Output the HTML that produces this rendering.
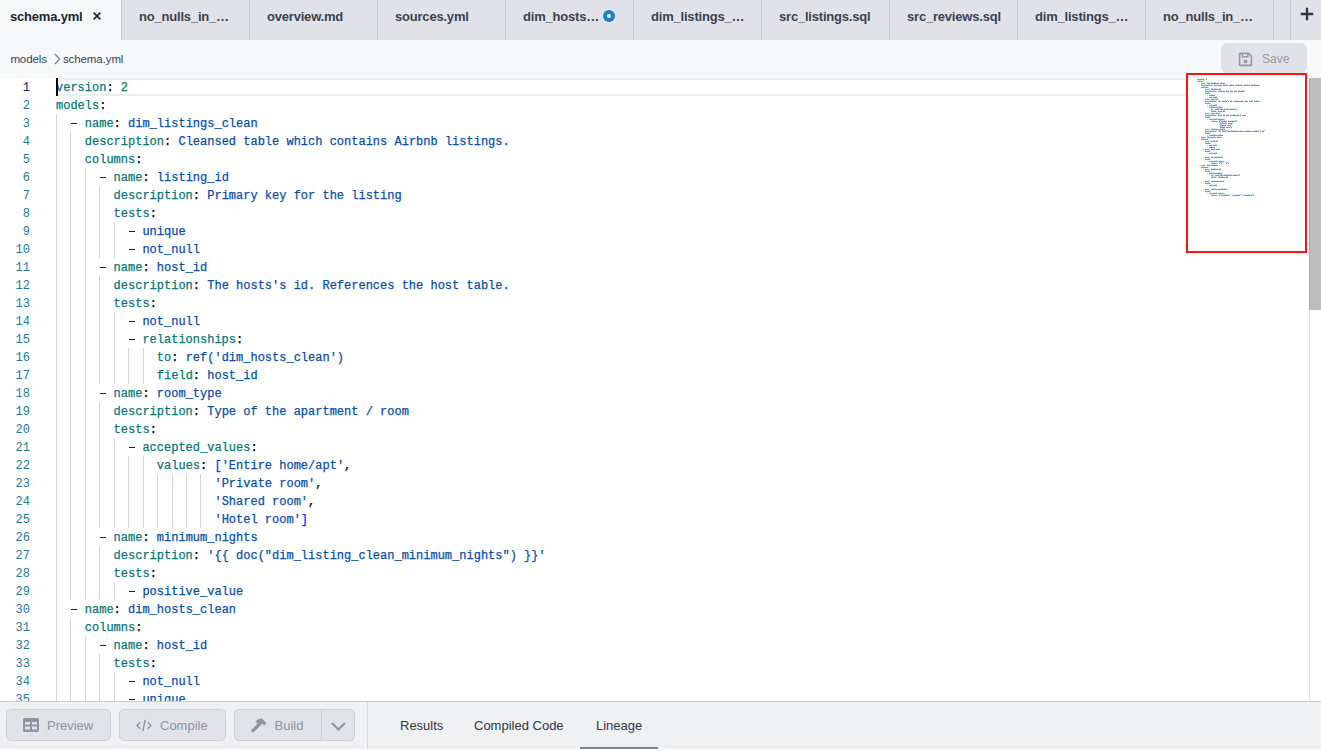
<!DOCTYPE html>
<html><head><meta charset="utf-8">
<style>
*{margin:0;padding:0;box-sizing:border-box}
html,body{width:1321px;height:751px;overflow:hidden;background:#f7f8fa;font-family:"Liberation Sans",sans-serif;position:relative}
.tabs{position:absolute;left:0;top:0;width:1321px;height:40px;background:#e1e2e7}
.tab{position:absolute;top:0;height:40px;border-left:1px solid #c9ccd3;color:#3a4352;font-weight:bold;font-size:13px;letter-spacing:-0.2px;line-height:34px;padding-left:17px;white-space:nowrap}
.tab.act{background:#f7f8fa;color:#1e2530;border-left:none;padding-left:10px}
.x{position:absolute;left:93px;top:12px;width:8px;height:8px}
.dot{position:absolute;top:10px;width:12px;height:12px;border-radius:50%;background:#1a82cc}
.dot:after{content:"";position:absolute;left:3.8px;top:3.8px;width:4.4px;height:4.4px;border-radius:50%;background:#fff}
.plusdiv{position:absolute;top:0;width:1px;height:40px;background:#c9ccd3}
.crumb{position:absolute;left:10.4px;top:51px;font-size:11.5px;letter-spacing:-0.1px;color:#3a4352;white-space:nowrap;line-height:16px}
.save{position:absolute;left:1221px;top:43px;width:86px;height:30px;border-radius:6px;background:#e1e2e7;color:#9198a3;font-size:12px;line-height:30px}
.editor{position:absolute;left:0;top:78px;width:1309px;height:623px;background:#fff;overflow:hidden}
.row{position:absolute;left:0;width:1308px;height:18px}
.row i{position:absolute;top:0;width:1px;height:18px;background:#d3d3d3}
.ln{position:absolute;left:0;top:1px;width:30px;text-align:right;font-family:"Liberation Mono",monospace;font-size:12px;line-height:18px;color:#237893}
.ln.cur{color:#0b216f}
pre{position:absolute;left:56px;top:1px;font-family:"Liberation Mono",monospace;font-size:12px;line-height:18px;color:#000;-webkit-text-stroke:0.25px currentColor}
.k{color:#0a7676}.s{color:#0a4ea2}.n{color:#098658}.b{color:#0431fa}.p{color:#000}
.d{display:inline-block;width:7.2px;position:relative;color:transparent}
.d:after{content:"";position:absolute;left:0.6px;top:8.2px;width:6px;height:1.1px;background:#222}
.curline{position:absolute;left:56px;top:78px;width:1132px;height:18px;border-top:2px solid #eeeeee;border-bottom:2px solid #eeeeee}
.cursor{position:absolute;left:56px;top:78px;width:2px;height:18px;background:#000}
.minimap{position:absolute;left:1186px;top:73px;width:121px;height:180px;border:2px solid #ff1212}
.strack{position:absolute;left:1309px;top:78px;width:12px;height:623px;background:#fff;border-left:1px solid #e4e4e4}
.sthumb{position:absolute;left:1309px;top:78px;width:12px;height:232px;background:#bdbdbd;border-left:1px solid #a8a8a8}
.bottom{position:absolute;left:0;top:701px;width:1321px;height:48px;background:#f0f1f3;border-top:1px solid #c9ccd3}
.btn{position:absolute;top:7px;height:32px;border:1px solid #cdd0d6;border-radius:5px;background:#e1e3e8;color:#8e95a0;font-size:13px;line-height:30px}
.vdiv{position:absolute;left:367px;top:0;width:1px;height:48px;background:#d6d9de}
.bt{position:absolute;top:16px;font-size:13px;color:#2f3743;line-height:16px;white-space:nowrap}
.uline{position:absolute;left:580px;top:747px;width:78px;height:2px;background:#7d8795}
.wbot{position:absolute;left:0;top:749px;width:1321px;height:2px;background:#fff}
.mm{position:absolute;left:1197px;top:78px;font-size:1.6667px;line-height:2px;opacity:0.9}
.mm .d{width:1px}.mm .d:after{display:none}
</style></head><body>
<div class="tabs">
  <div class="tab act" style="left:0;width:121px">schema.yml<svg class="x" viewBox="0 0 8 8"><path d="M0.6 0.6L7.4 7.4M7.4 0.6L0.6 7.4" stroke="#1e2530" stroke-width="1.7"/></svg></div>
  <div class="tab" style="left:121px;width:128px">no_nulls_in_…</div>
  <div class="tab" style="left:249px;width:128px">overview.md</div>
  <div class="tab" style="left:377px;width:128px">sources.yml</div>
  <div class="tab" style="left:505px;width:128px">dim_hosts…<span class="dot" style="left:97px"></span></div>
  <div class="tab" style="left:633px;width:128px">dim_listings_…</div>
  <div class="tab" style="left:761px;width:128px">src_listings.sql</div>
  <div class="tab" style="left:889px;width:128px">src_reviews.sql</div>
  <div class="tab" style="left:1017px;width:128px">dim_listings_…</div>
  <div class="tab" style="left:1145px;width:128px">no_nulls_in_…</div>
  <div class="plusdiv" style="left:1273px"></div>
  <div class="plusdiv" style="left:1290px"></div>
  <svg style="position:absolute;left:1300px;top:7px" width="14" height="14" viewBox="0 0 14 14"><path d="M7 0.8V13.2M0.8 7H13.2" stroke="#2b3544" stroke-width="2.3"/></svg>
</div>
<div class="crumb">models <svg width="7" height="12" viewBox="0 0 7 12" style="vertical-align:-2px;margin-left:4px;margin-right:2px"><path d="M1 1L5.5 6L1 11" fill="none" stroke="#7a8290" stroke-width="1.2"/></svg>schema.yml</div>
<div class="save"><svg style="position:absolute;left:17px;top:8.6px" width="15" height="15" viewBox="0 0 15 15"><path d="M1.6 1.8Q1.6 1.4 2 1.4H10.6L13.4 4.2V12.8Q13.4 13.4 12.8 13.4H2.2Q1.6 13.4 1.6 12.8Z" fill="none" stroke="#9198a3" stroke-width="1.6" stroke-linejoin="round"/><path d="M4.4 1.4V4.8H10V1.4" fill="none" stroke="#9198a3" stroke-width="1.4"/><rect x="5.8" y="7.8" width="3.4" height="3.2" fill="#9198a3"/></svg><span style="position:absolute;left:41px;top:1px">Save</span></div>
<div class="editor"></div>
<div class="strack"></div>
<div class="curline"></div>
<div class="row" style="top:78px"><span class="ln cur">1</span><pre><span class=k>version</span><span class=p>:</span> <span class=n>2</span></pre></div>
<div class="row" style="top:96px"><span class="ln">2</span><pre><span class=k>models</span><span class=p>:</span></pre></div>
<div class="row" style="top:114px"><i style="left:56.00px"></i><span class="ln">3</span><pre>  <span class=d>-</span> <span class=k>name</span><span class=p>:</span> <span class=s>dim_listings_clean</span></pre></div>
<div class="row" style="top:132px"><i style="left:56.00px"></i><i style="left:70.44px"></i><span class="ln">4</span><pre>    <span class=k>description</span><span class=p>:</span> <span class=s>Cleansed table which contains Airbnb listings.</span></pre></div>
<div class="row" style="top:150px"><i style="left:56.00px"></i><i style="left:70.44px"></i><span class="ln">5</span><pre>    <span class=k>columns</span><span class=p>:</span></pre></div>
<div class="row" style="top:168px"><i style="left:56.00px"></i><i style="left:70.44px"></i><i style="left:84.88px"></i><span class="ln">6</span><pre>      <span class=d>-</span> <span class=k>name</span><span class=p>:</span> <span class=s>listing_id</span></pre></div>
<div class="row" style="top:186px"><i style="left:56.00px"></i><i style="left:70.44px"></i><i style="left:84.88px"></i><i style="left:99.32px"></i><span class="ln">7</span><pre>        <span class=k>description</span><span class=p>:</span> <span class=s>Primary key for the listing</span></pre></div>
<div class="row" style="top:204px"><i style="left:56.00px"></i><i style="left:70.44px"></i><i style="left:84.88px"></i><i style="left:99.32px"></i><span class="ln">8</span><pre>        <span class=k>tests</span><span class=p>:</span></pre></div>
<div class="row" style="top:222px"><i style="left:56.00px"></i><i style="left:70.44px"></i><i style="left:84.88px"></i><i style="left:99.32px"></i><i style="left:113.76px"></i><span class="ln">9</span><pre>          <span class=d>-</span> <span class=s>unique</span></pre></div>
<div class="row" style="top:240px"><i style="left:56.00px"></i><i style="left:70.44px"></i><i style="left:84.88px"></i><i style="left:99.32px"></i><i style="left:113.76px"></i><span class="ln">10</span><pre>          <span class=d>-</span> <span class=s>not_null</span></pre></div>
<div class="row" style="top:258px"><i style="left:56.00px"></i><i style="left:70.44px"></i><i style="left:84.88px"></i><span class="ln">11</span><pre>      <span class=d>-</span> <span class=k>name</span><span class=p>:</span> <span class=s>host_id</span></pre></div>
<div class="row" style="top:276px"><i style="left:56.00px"></i><i style="left:70.44px"></i><i style="left:84.88px"></i><i style="left:99.32px"></i><span class="ln">12</span><pre>        <span class=k>description</span><span class=p>:</span> <span class=s>The hosts's id. References the host table.</span></pre></div>
<div class="row" style="top:294px"><i style="left:56.00px"></i><i style="left:70.44px"></i><i style="left:84.88px"></i><i style="left:99.32px"></i><span class="ln">13</span><pre>        <span class=k>tests</span><span class=p>:</span></pre></div>
<div class="row" style="top:312px"><i style="left:56.00px"></i><i style="left:70.44px"></i><i style="left:84.88px"></i><i style="left:99.32px"></i><i style="left:113.76px"></i><span class="ln">14</span><pre>          <span class=d>-</span> <span class=s>not_null</span></pre></div>
<div class="row" style="top:330px"><i style="left:56.00px"></i><i style="left:70.44px"></i><i style="left:84.88px"></i><i style="left:99.32px"></i><i style="left:113.76px"></i><span class="ln">15</span><pre>          <span class=d>-</span> <span class=k>relationships</span><span class=p>:</span></pre></div>
<div class="row" style="top:348px"><i style="left:56.00px"></i><i style="left:70.44px"></i><i style="left:84.88px"></i><i style="left:99.32px"></i><i style="left:113.76px"></i><i style="left:128.20px"></i><i style="left:142.64px"></i><span class="ln">16</span><pre>              <span class=k>to</span><span class=p>:</span> <span class=s>ref('dim_hosts_clean')</span></pre></div>
<div class="row" style="top:366px"><i style="left:56.00px"></i><i style="left:70.44px"></i><i style="left:84.88px"></i><i style="left:99.32px"></i><i style="left:113.76px"></i><i style="left:128.20px"></i><i style="left:142.64px"></i><span class="ln">17</span><pre>              <span class=k>field</span><span class=p>:</span> <span class=s>host_id</span></pre></div>
<div class="row" style="top:384px"><i style="left:56.00px"></i><i style="left:70.44px"></i><i style="left:84.88px"></i><span class="ln">18</span><pre>      <span class=d>-</span> <span class=k>name</span><span class=p>:</span> <span class=s>room_type</span></pre></div>
<div class="row" style="top:402px"><i style="left:56.00px"></i><i style="left:70.44px"></i><i style="left:84.88px"></i><i style="left:99.32px"></i><span class="ln">19</span><pre>        <span class=k>description</span><span class=p>:</span> <span class=s>Type of the apartment / room</span></pre></div>
<div class="row" style="top:420px"><i style="left:56.00px"></i><i style="left:70.44px"></i><i style="left:84.88px"></i><i style="left:99.32px"></i><span class="ln">20</span><pre>        <span class=k>tests</span><span class=p>:</span></pre></div>
<div class="row" style="top:438px"><i style="left:56.00px"></i><i style="left:70.44px"></i><i style="left:84.88px"></i><i style="left:99.32px"></i><i style="left:113.76px"></i><span class="ln">21</span><pre>          <span class=d>-</span> <span class=k>accepted_values</span><span class=p>:</span></pre></div>
<div class="row" style="top:456px"><i style="left:56.00px"></i><i style="left:70.44px"></i><i style="left:84.88px"></i><i style="left:99.32px"></i><i style="left:113.76px"></i><i style="left:128.20px"></i><i style="left:142.64px"></i><span class="ln">22</span><pre>              <span class=k>values</span><span class=p>:</span> <span class=b>[</span><span class=s>'Entire home/apt'</span><span class=p>,</span></pre></div>
<div class="row" style="top:474px"><i style="left:56.00px"></i><i style="left:70.44px"></i><i style="left:84.88px"></i><i style="left:99.32px"></i><i style="left:113.76px"></i><i style="left:128.20px"></i><i style="left:142.64px"></i><i style="left:157.08px"></i><i style="left:171.52px"></i><i style="left:185.96px"></i><i style="left:200.40px"></i><span class="ln">23</span><pre>                      <span class=s>'Private room'</span><span class=p>,</span></pre></div>
<div class="row" style="top:492px"><i style="left:56.00px"></i><i style="left:70.44px"></i><i style="left:84.88px"></i><i style="left:99.32px"></i><i style="left:113.76px"></i><i style="left:128.20px"></i><i style="left:142.64px"></i><i style="left:157.08px"></i><i style="left:171.52px"></i><i style="left:185.96px"></i><i style="left:200.40px"></i><span class="ln">24</span><pre>                      <span class=s>'Shared room'</span><span class=p>,</span></pre></div>
<div class="row" style="top:510px"><i style="left:56.00px"></i><i style="left:70.44px"></i><i style="left:84.88px"></i><i style="left:99.32px"></i><i style="left:113.76px"></i><i style="left:128.20px"></i><i style="left:142.64px"></i><i style="left:157.08px"></i><i style="left:171.52px"></i><i style="left:185.96px"></i><i style="left:200.40px"></i><span class="ln">25</span><pre>                      <span class=s>'Hotel room'</span><span class=b>]</span></pre></div>
<div class="row" style="top:528px"><i style="left:56.00px"></i><i style="left:70.44px"></i><i style="left:84.88px"></i><span class="ln">26</span><pre>      <span class=d>-</span> <span class=k>name</span><span class=p>:</span> <span class=s>minimum_nights</span></pre></div>
<div class="row" style="top:546px"><i style="left:56.00px"></i><i style="left:70.44px"></i><i style="left:84.88px"></i><i style="left:99.32px"></i><span class="ln">27</span><pre>        <span class=k>description</span><span class=p>:</span> <span class=s>'{{ doc("dim_listing_clean_minimum_nights") }}'</span></pre></div>
<div class="row" style="top:564px"><i style="left:56.00px"></i><i style="left:70.44px"></i><i style="left:84.88px"></i><i style="left:99.32px"></i><span class="ln">28</span><pre>        <span class=k>tests</span><span class=p>:</span></pre></div>
<div class="row" style="top:582px"><i style="left:56.00px"></i><i style="left:70.44px"></i><i style="left:84.88px"></i><i style="left:99.32px"></i><i style="left:113.76px"></i><span class="ln">29</span><pre>          <span class=d>-</span> <span class=s>positive_value</span></pre></div>
<div class="row" style="top:600px"><i style="left:56.00px"></i><span class="ln">30</span><pre>  <span class=d>-</span> <span class=k>name</span><span class=p>:</span> <span class=s>dim_hosts_clean</span></pre></div>
<div class="row" style="top:618px"><i style="left:56.00px"></i><i style="left:70.44px"></i><span class="ln">31</span><pre>    <span class=k>columns</span><span class=p>:</span></pre></div>
<div class="row" style="top:636px"><i style="left:56.00px"></i><i style="left:70.44px"></i><i style="left:84.88px"></i><span class="ln">32</span><pre>      <span class=d>-</span> <span class=k>name</span><span class=p>:</span> <span class=s>host_id</span></pre></div>
<div class="row" style="top:654px"><i style="left:56.00px"></i><i style="left:70.44px"></i><i style="left:84.88px"></i><i style="left:99.32px"></i><span class="ln">33</span><pre>        <span class=k>tests</span><span class=p>:</span></pre></div>
<div class="row" style="top:672px"><i style="left:56.00px"></i><i style="left:70.44px"></i><i style="left:84.88px"></i><i style="left:99.32px"></i><i style="left:113.76px"></i><span class="ln">34</span><pre>          <span class=d>-</span> <span class=s>not_null</span></pre></div>
<div class="row" style="top:690px"><i style="left:56.00px"></i><i style="left:70.44px"></i><i style="left:84.88px"></i><i style="left:99.32px"></i><i style="left:113.76px"></i><span class="ln">35</span><pre>          <span class=d>-</span> <span class=s>unique</span></pre></div>
<div class="cursor"></div>
<svg width="1321" height="751" style="position:absolute;left:0;top:0" shape-rendering="crispEdges"><rect x="1197" y="78" width="4" height="1" fill="#008080" fill-opacity="0.07"/><rect x="1201" y="78" width="1" height="1" fill="#008080" fill-opacity="0.26"/><rect x="1202" y="78" width="2" height="1" fill="#008080" fill-opacity="0.07"/><rect x="1204" y="78" width="1" height="1" fill="#000000" fill-opacity="0.07"/><rect x="1206" y="78" width="1" height="1" fill="#098658" fill-opacity="0.24"/><rect x="1197" y="79" width="7" height="1" fill="#008080" fill-opacity="0.61"/><rect x="1204" y="79" width="1" height="1" fill="#000000" fill-opacity="0.17"/><rect x="1206" y="79" width="1" height="1" fill="#098658" fill-opacity="0.58"/><rect x="1197" y="80" width="2" height="1" fill="#008080" fill-opacity="0.07"/><rect x="1199" y="80" width="1" height="1" fill="#008080" fill-opacity="0.26"/><rect x="1200" y="80" width="1" height="1" fill="#008080" fill-opacity="0.07"/><rect x="1201" y="80" width="1" height="1" fill="#008080" fill-opacity="0.26"/><rect x="1202" y="80" width="1" height="1" fill="#008080" fill-opacity="0.07"/><rect x="1203" y="80" width="1" height="1" fill="#000000" fill-opacity="0.07"/><rect x="1197" y="81" width="6" height="1" fill="#008080" fill-opacity="0.61"/><rect x="1203" y="81" width="1" height="1" fill="#000000" fill-opacity="0.17"/><rect x="1199" y="82" width="1" height="1" fill="#000000" fill-opacity="0.04"/><rect x="1201" y="82" width="4" height="1" fill="#008080" fill-opacity="0.07"/><rect x="1205" y="82" width="1" height="1" fill="#000000" fill-opacity="0.07"/><rect x="1207" y="82" width="2" height="1" fill="#0451a5" fill-opacity="0.24"/><rect x="1209" y="82" width="2" height="1" fill="#0451a5" fill-opacity="0.06"/><rect x="1211" y="82" width="2" height="1" fill="#0451a5" fill-opacity="0.24"/><rect x="1213" y="82" width="1" height="1" fill="#0451a5" fill-opacity="0.06"/><rect x="1214" y="82" width="2" height="1" fill="#0451a5" fill-opacity="0.24"/><rect x="1216" y="82" width="5" height="1" fill="#0451a5" fill-opacity="0.06"/><rect x="1221" y="82" width="1" height="1" fill="#0451a5" fill-opacity="0.24"/><rect x="1222" y="82" width="3" height="1" fill="#0451a5" fill-opacity="0.06"/><rect x="1199" y="83" width="1" height="1" fill="#000000" fill-opacity="0.17"/><rect x="1201" y="83" width="4" height="1" fill="#008080" fill-opacity="0.61"/><rect x="1205" y="83" width="1" height="1" fill="#000000" fill-opacity="0.17"/><rect x="1207" y="83" width="3" height="1" fill="#0451a5" fill-opacity="0.58"/><rect x="1210" y="83" width="1" height="1" fill="#0451a5" fill-opacity="0.32"/><rect x="1211" y="83" width="8" height="1" fill="#0451a5" fill-opacity="0.58"/><rect x="1219" y="83" width="1" height="1" fill="#0451a5" fill-opacity="0.32"/><rect x="1220" y="83" width="5" height="1" fill="#0451a5" fill-opacity="0.58"/><rect x="1201" y="84" width="1" height="1" fill="#008080" fill-opacity="0.26"/><rect x="1202" y="84" width="4" height="1" fill="#008080" fill-opacity="0.07"/><rect x="1206" y="84" width="1" height="1" fill="#008080" fill-opacity="0.26"/><rect x="1207" y="84" width="1" height="1" fill="#008080" fill-opacity="0.07"/><rect x="1208" y="84" width="2" height="1" fill="#008080" fill-opacity="0.26"/><rect x="1210" y="84" width="2" height="1" fill="#008080" fill-opacity="0.07"/><rect x="1212" y="84" width="1" height="1" fill="#000000" fill-opacity="0.07"/><rect x="1214" y="84" width="2" height="1" fill="#0451a5" fill-opacity="0.24"/><rect x="1216" y="84" width="5" height="1" fill="#0451a5" fill-opacity="0.06"/><rect x="1221" y="84" width="1" height="1" fill="#0451a5" fill-opacity="0.24"/><rect x="1223" y="84" width="1" height="1" fill="#0451a5" fill-opacity="0.24"/><rect x="1224" y="84" width="1" height="1" fill="#0451a5" fill-opacity="0.06"/><rect x="1225" y="84" width="2" height="1" fill="#0451a5" fill-opacity="0.24"/><rect x="1227" y="84" width="1" height="1" fill="#0451a5" fill-opacity="0.06"/><rect x="1229" y="84" width="1" height="1" fill="#0451a5" fill-opacity="0.06"/><rect x="1230" y="84" width="2" height="1" fill="#0451a5" fill-opacity="0.24"/><rect x="1232" y="84" width="1" height="1" fill="#0451a5" fill-opacity="0.06"/><rect x="1233" y="84" width="1" height="1" fill="#0451a5" fill-opacity="0.24"/><rect x="1235" y="84" width="3" height="1" fill="#0451a5" fill-opacity="0.06"/><rect x="1238" y="84" width="1" height="1" fill="#0451a5" fill-opacity="0.24"/><rect x="1239" y="84" width="1" height="1" fill="#0451a5" fill-opacity="0.06"/><rect x="1240" y="84" width="1" height="1" fill="#0451a5" fill-opacity="0.24"/><rect x="1241" y="84" width="2" height="1" fill="#0451a5" fill-opacity="0.06"/><rect x="1244" y="84" width="2" height="1" fill="#0451a5" fill-opacity="0.24"/><rect x="1246" y="84" width="1" height="1" fill="#0451a5" fill-opacity="0.06"/><rect x="1247" y="84" width="1" height="1" fill="#0451a5" fill-opacity="0.24"/><rect x="1248" y="84" width="1" height="1" fill="#0451a5" fill-opacity="0.06"/><rect x="1249" y="84" width="1" height="1" fill="#0451a5" fill-opacity="0.24"/><rect x="1251" y="84" width="2" height="1" fill="#0451a5" fill-opacity="0.24"/><rect x="1253" y="84" width="1" height="1" fill="#0451a5" fill-opacity="0.06"/><rect x="1254" y="84" width="2" height="1" fill="#0451a5" fill-opacity="0.24"/><rect x="1256" y="84" width="4" height="1" fill="#0451a5" fill-opacity="0.06"/><rect x="1201" y="85" width="11" height="1" fill="#008080" fill-opacity="0.61"/><rect x="1212" y="85" width="1" height="1" fill="#000000" fill-opacity="0.17"/><rect x="1214" y="85" width="8" height="1" fill="#0451a5" fill-opacity="0.58"/><rect x="1223" y="85" width="5" height="1" fill="#0451a5" fill-opacity="0.58"/><rect x="1229" y="85" width="5" height="1" fill="#0451a5" fill-opacity="0.58"/><rect x="1235" y="85" width="8" height="1" fill="#0451a5" fill-opacity="0.58"/><rect x="1244" y="85" width="6" height="1" fill="#0451a5" fill-opacity="0.58"/><rect x="1251" y="85" width="8" height="1" fill="#0451a5" fill-opacity="0.58"/><rect x="1259" y="85" width="1" height="1" fill="#0451a5" fill-opacity="0.28"/><rect x="1201" y="86" width="2" height="1" fill="#008080" fill-opacity="0.07"/><rect x="1203" y="86" width="1" height="1" fill="#008080" fill-opacity="0.26"/><rect x="1204" y="86" width="4" height="1" fill="#008080" fill-opacity="0.07"/><rect x="1208" y="86" width="1" height="1" fill="#000000" fill-opacity="0.07"/><rect x="1201" y="87" width="7" height="1" fill="#008080" fill-opacity="0.61"/><rect x="1208" y="87" width="1" height="1" fill="#000000" fill-opacity="0.17"/><rect x="1203" y="88" width="1" height="1" fill="#000000" fill-opacity="0.04"/><rect x="1205" y="88" width="4" height="1" fill="#008080" fill-opacity="0.07"/><rect x="1209" y="88" width="1" height="1" fill="#000000" fill-opacity="0.07"/><rect x="1211" y="88" width="2" height="1" fill="#0451a5" fill-opacity="0.24"/><rect x="1213" y="88" width="1" height="1" fill="#0451a5" fill-opacity="0.06"/><rect x="1214" y="88" width="2" height="1" fill="#0451a5" fill-opacity="0.24"/><rect x="1216" y="88" width="3" height="1" fill="#0451a5" fill-opacity="0.06"/><rect x="1219" y="88" width="2" height="1" fill="#0451a5" fill-opacity="0.24"/><rect x="1203" y="89" width="1" height="1" fill="#000000" fill-opacity="0.17"/><rect x="1205" y="89" width="4" height="1" fill="#008080" fill-opacity="0.61"/><rect x="1209" y="89" width="1" height="1" fill="#000000" fill-opacity="0.17"/><rect x="1211" y="89" width="7" height="1" fill="#0451a5" fill-opacity="0.58"/><rect x="1218" y="89" width="1" height="1" fill="#0451a5" fill-opacity="0.32"/><rect x="1219" y="89" width="2" height="1" fill="#0451a5" fill-opacity="0.58"/><rect x="1205" y="90" width="1" height="1" fill="#008080" fill-opacity="0.26"/><rect x="1206" y="90" width="4" height="1" fill="#008080" fill-opacity="0.07"/><rect x="1210" y="90" width="1" height="1" fill="#008080" fill-opacity="0.26"/><rect x="1211" y="90" width="1" height="1" fill="#008080" fill-opacity="0.07"/><rect x="1212" y="90" width="2" height="1" fill="#008080" fill-opacity="0.26"/><rect x="1214" y="90" width="2" height="1" fill="#008080" fill-opacity="0.07"/><rect x="1216" y="90" width="1" height="1" fill="#000000" fill-opacity="0.07"/><rect x="1218" y="90" width="1" height="1" fill="#0451a5" fill-opacity="0.24"/><rect x="1219" y="90" width="1" height="1" fill="#0451a5" fill-opacity="0.06"/><rect x="1220" y="90" width="1" height="1" fill="#0451a5" fill-opacity="0.24"/><rect x="1221" y="90" width="4" height="1" fill="#0451a5" fill-opacity="0.06"/><rect x="1226" y="90" width="1" height="1" fill="#0451a5" fill-opacity="0.24"/><rect x="1227" y="90" width="2" height="1" fill="#0451a5" fill-opacity="0.06"/><rect x="1230" y="90" width="1" height="1" fill="#0451a5" fill-opacity="0.24"/><rect x="1231" y="90" width="2" height="1" fill="#0451a5" fill-opacity="0.06"/><rect x="1234" y="90" width="2" height="1" fill="#0451a5" fill-opacity="0.24"/><rect x="1236" y="90" width="1" height="1" fill="#0451a5" fill-opacity="0.06"/><rect x="1238" y="90" width="2" height="1" fill="#0451a5" fill-opacity="0.24"/><rect x="1240" y="90" width="1" height="1" fill="#0451a5" fill-opacity="0.06"/><rect x="1241" y="90" width="2" height="1" fill="#0451a5" fill-opacity="0.24"/><rect x="1243" y="90" width="2" height="1" fill="#0451a5" fill-opacity="0.06"/><rect x="1205" y="91" width="11" height="1" fill="#008080" fill-opacity="0.61"/><rect x="1216" y="91" width="1" height="1" fill="#000000" fill-opacity="0.17"/><rect x="1218" y="91" width="7" height="1" fill="#0451a5" fill-opacity="0.58"/><rect x="1226" y="91" width="3" height="1" fill="#0451a5" fill-opacity="0.58"/><rect x="1230" y="91" width="3" height="1" fill="#0451a5" fill-opacity="0.58"/><rect x="1234" y="91" width="3" height="1" fill="#0451a5" fill-opacity="0.58"/><rect x="1238" y="91" width="7" height="1" fill="#0451a5" fill-opacity="0.58"/><rect x="1205" y="92" width="1" height="1" fill="#008080" fill-opacity="0.26"/><rect x="1206" y="92" width="2" height="1" fill="#008080" fill-opacity="0.07"/><rect x="1208" y="92" width="1" height="1" fill="#008080" fill-opacity="0.26"/><rect x="1209" y="92" width="1" height="1" fill="#008080" fill-opacity="0.07"/><rect x="1210" y="92" width="1" height="1" fill="#000000" fill-opacity="0.07"/><rect x="1205" y="93" width="5" height="1" fill="#008080" fill-opacity="0.61"/><rect x="1210" y="93" width="1" height="1" fill="#000000" fill-opacity="0.17"/><rect x="1207" y="94" width="1" height="1" fill="#000000" fill-opacity="0.04"/><rect x="1209" y="94" width="2" height="1" fill="#0451a5" fill-opacity="0.06"/><rect x="1211" y="94" width="1" height="1" fill="#0451a5" fill-opacity="0.24"/><rect x="1212" y="94" width="3" height="1" fill="#0451a5" fill-opacity="0.06"/><rect x="1207" y="95" width="1" height="1" fill="#000000" fill-opacity="0.17"/><rect x="1209" y="95" width="6" height="1" fill="#0451a5" fill-opacity="0.58"/><rect x="1207" y="96" width="1" height="1" fill="#000000" fill-opacity="0.04"/><rect x="1209" y="96" width="2" height="1" fill="#0451a5" fill-opacity="0.06"/><rect x="1211" y="96" width="1" height="1" fill="#0451a5" fill-opacity="0.24"/><rect x="1212" y="96" width="3" height="1" fill="#0451a5" fill-opacity="0.06"/><rect x="1215" y="96" width="2" height="1" fill="#0451a5" fill-opacity="0.24"/><rect x="1207" y="97" width="1" height="1" fill="#000000" fill-opacity="0.17"/><rect x="1209" y="97" width="3" height="1" fill="#0451a5" fill-opacity="0.58"/><rect x="1212" y="97" width="1" height="1" fill="#0451a5" fill-opacity="0.32"/><rect x="1213" y="97" width="4" height="1" fill="#0451a5" fill-opacity="0.58"/><rect x="1203" y="98" width="1" height="1" fill="#000000" fill-opacity="0.04"/><rect x="1205" y="98" width="4" height="1" fill="#008080" fill-opacity="0.07"/><rect x="1209" y="98" width="1" height="1" fill="#000000" fill-opacity="0.07"/><rect x="1211" y="98" width="1" height="1" fill="#0451a5" fill-opacity="0.24"/><rect x="1212" y="98" width="2" height="1" fill="#0451a5" fill-opacity="0.06"/><rect x="1214" y="98" width="1" height="1" fill="#0451a5" fill-opacity="0.24"/><rect x="1215" y="98" width="1" height="1" fill="#0451a5" fill-opacity="0.06"/><rect x="1216" y="98" width="2" height="1" fill="#0451a5" fill-opacity="0.24"/><rect x="1203" y="99" width="1" height="1" fill="#000000" fill-opacity="0.17"/><rect x="1205" y="99" width="4" height="1" fill="#008080" fill-opacity="0.61"/><rect x="1209" y="99" width="1" height="1" fill="#000000" fill-opacity="0.17"/><rect x="1211" y="99" width="4" height="1" fill="#0451a5" fill-opacity="0.58"/><rect x="1215" y="99" width="1" height="1" fill="#0451a5" fill-opacity="0.32"/><rect x="1216" y="99" width="2" height="1" fill="#0451a5" fill-opacity="0.58"/><rect x="1205" y="100" width="1" height="1" fill="#008080" fill-opacity="0.26"/><rect x="1206" y="100" width="4" height="1" fill="#008080" fill-opacity="0.07"/><rect x="1210" y="100" width="1" height="1" fill="#008080" fill-opacity="0.26"/><rect x="1211" y="100" width="1" height="1" fill="#008080" fill-opacity="0.07"/><rect x="1212" y="100" width="2" height="1" fill="#008080" fill-opacity="0.26"/><rect x="1214" y="100" width="2" height="1" fill="#008080" fill-opacity="0.07"/><rect x="1216" y="100" width="1" height="1" fill="#000000" fill-opacity="0.07"/><rect x="1218" y="100" width="2" height="1" fill="#0451a5" fill-opacity="0.24"/><rect x="1220" y="100" width="1" height="1" fill="#0451a5" fill-opacity="0.06"/><rect x="1222" y="100" width="1" height="1" fill="#0451a5" fill-opacity="0.24"/><rect x="1223" y="100" width="2" height="1" fill="#0451a5" fill-opacity="0.06"/><rect x="1225" y="100" width="1" height="1" fill="#0451a5" fill-opacity="0.24"/><rect x="1226" y="100" width="1" height="1" fill="#0451a5" fill-opacity="0.06"/><rect x="1227" y="100" width="1" height="1" fill="#0451a5" fill-opacity="0.32"/><rect x="1228" y="100" width="1" height="1" fill="#0451a5" fill-opacity="0.06"/><rect x="1230" y="100" width="2" height="1" fill="#0451a5" fill-opacity="0.24"/><rect x="1232" y="100" width="1" height="1" fill="#0451a5" fill-opacity="0.06"/><rect x="1234" y="100" width="1" height="1" fill="#0451a5" fill-opacity="0.24"/><rect x="1235" y="100" width="1" height="1" fill="#0451a5" fill-opacity="0.06"/><rect x="1236" y="100" width="1" height="1" fill="#0451a5" fill-opacity="0.24"/><rect x="1237" y="100" width="7" height="1" fill="#0451a5" fill-opacity="0.06"/><rect x="1245" y="100" width="2" height="1" fill="#0451a5" fill-opacity="0.24"/><rect x="1247" y="100" width="1" height="1" fill="#0451a5" fill-opacity="0.06"/><rect x="1249" y="100" width="1" height="1" fill="#0451a5" fill-opacity="0.24"/><rect x="1250" y="100" width="2" height="1" fill="#0451a5" fill-opacity="0.06"/><rect x="1252" y="100" width="1" height="1" fill="#0451a5" fill-opacity="0.24"/><rect x="1254" y="100" width="1" height="1" fill="#0451a5" fill-opacity="0.24"/><rect x="1255" y="100" width="1" height="1" fill="#0451a5" fill-opacity="0.06"/><rect x="1256" y="100" width="2" height="1" fill="#0451a5" fill-opacity="0.24"/><rect x="1258" y="100" width="2" height="1" fill="#0451a5" fill-opacity="0.06"/><rect x="1205" y="101" width="11" height="1" fill="#008080" fill-opacity="0.61"/><rect x="1216" y="101" width="1" height="1" fill="#000000" fill-opacity="0.17"/><rect x="1218" y="101" width="3" height="1" fill="#0451a5" fill-opacity="0.58"/><rect x="1222" y="101" width="5" height="1" fill="#0451a5" fill-opacity="0.58"/><rect x="1227" y="101" width="1" height="1" fill="#0451a5" fill-opacity="0.04"/><rect x="1228" y="101" width="1" height="1" fill="#0451a5" fill-opacity="0.58"/><rect x="1230" y="101" width="2" height="1" fill="#0451a5" fill-opacity="0.58"/><rect x="1232" y="101" width="1" height="1" fill="#0451a5" fill-opacity="0.28"/><rect x="1234" y="101" width="10" height="1" fill="#0451a5" fill-opacity="0.58"/><rect x="1245" y="101" width="3" height="1" fill="#0451a5" fill-opacity="0.58"/><rect x="1249" y="101" width="4" height="1" fill="#0451a5" fill-opacity="0.58"/><rect x="1254" y="101" width="5" height="1" fill="#0451a5" fill-opacity="0.58"/><rect x="1259" y="101" width="1" height="1" fill="#0451a5" fill-opacity="0.28"/><rect x="1205" y="102" width="1" height="1" fill="#008080" fill-opacity="0.26"/><rect x="1206" y="102" width="2" height="1" fill="#008080" fill-opacity="0.07"/><rect x="1208" y="102" width="1" height="1" fill="#008080" fill-opacity="0.26"/><rect x="1209" y="102" width="1" height="1" fill="#008080" fill-opacity="0.07"/><rect x="1210" y="102" width="1" height="1" fill="#000000" fill-opacity="0.07"/><rect x="1205" y="103" width="5" height="1" fill="#008080" fill-opacity="0.61"/><rect x="1210" y="103" width="1" height="1" fill="#000000" fill-opacity="0.17"/><rect x="1207" y="104" width="1" height="1" fill="#000000" fill-opacity="0.04"/><rect x="1209" y="104" width="2" height="1" fill="#0451a5" fill-opacity="0.06"/><rect x="1211" y="104" width="1" height="1" fill="#0451a5" fill-opacity="0.24"/><rect x="1212" y="104" width="3" height="1" fill="#0451a5" fill-opacity="0.06"/><rect x="1215" y="104" width="2" height="1" fill="#0451a5" fill-opacity="0.24"/><rect x="1207" y="105" width="1" height="1" fill="#000000" fill-opacity="0.17"/><rect x="1209" y="105" width="3" height="1" fill="#0451a5" fill-opacity="0.58"/><rect x="1212" y="105" width="1" height="1" fill="#0451a5" fill-opacity="0.32"/><rect x="1213" y="105" width="4" height="1" fill="#0451a5" fill-opacity="0.58"/><rect x="1207" y="106" width="1" height="1" fill="#000000" fill-opacity="0.04"/><rect x="1209" y="106" width="2" height="1" fill="#008080" fill-opacity="0.07"/><rect x="1211" y="106" width="1" height="1" fill="#008080" fill-opacity="0.26"/><rect x="1212" y="106" width="1" height="1" fill="#008080" fill-opacity="0.07"/><rect x="1213" y="106" width="2" height="1" fill="#008080" fill-opacity="0.26"/><rect x="1215" y="106" width="3" height="1" fill="#008080" fill-opacity="0.07"/><rect x="1218" y="106" width="2" height="1" fill="#008080" fill-opacity="0.26"/><rect x="1220" y="106" width="2" height="1" fill="#008080" fill-opacity="0.07"/><rect x="1222" y="106" width="1" height="1" fill="#000000" fill-opacity="0.07"/><rect x="1207" y="107" width="1" height="1" fill="#000000" fill-opacity="0.17"/><rect x="1209" y="107" width="13" height="1" fill="#008080" fill-opacity="0.61"/><rect x="1222" y="107" width="1" height="1" fill="#000000" fill-opacity="0.17"/><rect x="1211" y="108" width="1" height="1" fill="#008080" fill-opacity="0.26"/><rect x="1212" y="108" width="1" height="1" fill="#008080" fill-opacity="0.07"/><rect x="1213" y="108" width="1" height="1" fill="#000000" fill-opacity="0.07"/><rect x="1215" y="108" width="2" height="1" fill="#0451a5" fill-opacity="0.06"/><rect x="1217" y="108" width="2" height="1" fill="#0451a5" fill-opacity="0.24"/><rect x="1219" y="108" width="1" height="1" fill="#0451a5" fill-opacity="0.32"/><rect x="1220" y="108" width="2" height="1" fill="#0451a5" fill-opacity="0.24"/><rect x="1222" y="108" width="2" height="1" fill="#0451a5" fill-opacity="0.06"/><rect x="1224" y="108" width="1" height="1" fill="#0451a5" fill-opacity="0.24"/><rect x="1225" y="108" width="2" height="1" fill="#0451a5" fill-opacity="0.06"/><rect x="1227" y="108" width="1" height="1" fill="#0451a5" fill-opacity="0.24"/><rect x="1228" y="108" width="3" height="1" fill="#0451a5" fill-opacity="0.06"/><rect x="1231" y="108" width="1" height="1" fill="#0451a5" fill-opacity="0.24"/><rect x="1232" y="108" width="3" height="1" fill="#0451a5" fill-opacity="0.06"/><rect x="1235" y="108" width="1" height="1" fill="#0451a5" fill-opacity="0.32"/><rect x="1236" y="108" width="1" height="1" fill="#0451a5" fill-opacity="0.24"/><rect x="1211" y="109" width="2" height="1" fill="#008080" fill-opacity="0.61"/><rect x="1213" y="109" width="1" height="1" fill="#000000" fill-opacity="0.17"/><rect x="1215" y="109" width="4" height="1" fill="#0451a5" fill-opacity="0.58"/><rect x="1219" y="109" width="1" height="1" fill="#0451a5" fill-opacity="0.04"/><rect x="1220" y="109" width="3" height="1" fill="#0451a5" fill-opacity="0.58"/><rect x="1223" y="109" width="1" height="1" fill="#0451a5" fill-opacity="0.32"/><rect x="1224" y="109" width="5" height="1" fill="#0451a5" fill-opacity="0.58"/><rect x="1229" y="109" width="1" height="1" fill="#0451a5" fill-opacity="0.32"/><rect x="1230" y="109" width="5" height="1" fill="#0451a5" fill-opacity="0.58"/><rect x="1235" y="109" width="1" height="1" fill="#0451a5" fill-opacity="0.04"/><rect x="1236" y="109" width="1" height="1" fill="#0451a5" fill-opacity="0.58"/><rect x="1211" y="110" width="2" height="1" fill="#008080" fill-opacity="0.26"/><rect x="1213" y="110" width="1" height="1" fill="#008080" fill-opacity="0.07"/><rect x="1214" y="110" width="2" height="1" fill="#008080" fill-opacity="0.26"/><rect x="1216" y="110" width="1" height="1" fill="#000000" fill-opacity="0.07"/><rect x="1218" y="110" width="1" height="1" fill="#0451a5" fill-opacity="0.24"/><rect x="1219" y="110" width="2" height="1" fill="#0451a5" fill-opacity="0.06"/><rect x="1221" y="110" width="1" height="1" fill="#0451a5" fill-opacity="0.24"/><rect x="1222" y="110" width="1" height="1" fill="#0451a5" fill-opacity="0.06"/><rect x="1223" y="110" width="2" height="1" fill="#0451a5" fill-opacity="0.24"/><rect x="1211" y="111" width="5" height="1" fill="#008080" fill-opacity="0.61"/><rect x="1216" y="111" width="1" height="1" fill="#000000" fill-opacity="0.17"/><rect x="1218" y="111" width="4" height="1" fill="#0451a5" fill-opacity="0.58"/><rect x="1222" y="111" width="1" height="1" fill="#0451a5" fill-opacity="0.32"/><rect x="1223" y="111" width="2" height="1" fill="#0451a5" fill-opacity="0.58"/><rect x="1203" y="112" width="1" height="1" fill="#000000" fill-opacity="0.04"/><rect x="1205" y="112" width="4" height="1" fill="#008080" fill-opacity="0.07"/><rect x="1209" y="112" width="1" height="1" fill="#000000" fill-opacity="0.07"/><rect x="1211" y="112" width="5" height="1" fill="#0451a5" fill-opacity="0.06"/><rect x="1216" y="112" width="1" height="1" fill="#0451a5" fill-opacity="0.24"/><rect x="1217" y="112" width="3" height="1" fill="#0451a5" fill-opacity="0.06"/><rect x="1203" y="113" width="1" height="1" fill="#000000" fill-opacity="0.17"/><rect x="1205" y="113" width="4" height="1" fill="#008080" fill-opacity="0.61"/><rect x="1209" y="113" width="1" height="1" fill="#000000" fill-opacity="0.17"/><rect x="1211" y="113" width="4" height="1" fill="#0451a5" fill-opacity="0.58"/><rect x="1215" y="113" width="1" height="1" fill="#0451a5" fill-opacity="0.32"/><rect x="1216" y="113" width="4" height="1" fill="#0451a5" fill-opacity="0.58"/><rect x="1205" y="114" width="1" height="1" fill="#008080" fill-opacity="0.26"/><rect x="1206" y="114" width="4" height="1" fill="#008080" fill-opacity="0.07"/><rect x="1210" y="114" width="1" height="1" fill="#008080" fill-opacity="0.26"/><rect x="1211" y="114" width="1" height="1" fill="#008080" fill-opacity="0.07"/><rect x="1212" y="114" width="2" height="1" fill="#008080" fill-opacity="0.26"/><rect x="1214" y="114" width="2" height="1" fill="#008080" fill-opacity="0.07"/><rect x="1216" y="114" width="1" height="1" fill="#000000" fill-opacity="0.07"/><rect x="1218" y="114" width="1" height="1" fill="#0451a5" fill-opacity="0.24"/><rect x="1219" y="114" width="3" height="1" fill="#0451a5" fill-opacity="0.06"/><rect x="1223" y="114" width="1" height="1" fill="#0451a5" fill-opacity="0.06"/><rect x="1224" y="114" width="1" height="1" fill="#0451a5" fill-opacity="0.24"/><rect x="1226" y="114" width="2" height="1" fill="#0451a5" fill-opacity="0.24"/><rect x="1228" y="114" width="1" height="1" fill="#0451a5" fill-opacity="0.06"/><rect x="1230" y="114" width="4" height="1" fill="#0451a5" fill-opacity="0.06"/><rect x="1234" y="114" width="1" height="1" fill="#0451a5" fill-opacity="0.24"/><rect x="1235" y="114" width="3" height="1" fill="#0451a5" fill-opacity="0.06"/><rect x="1238" y="114" width="1" height="1" fill="#0451a5" fill-opacity="0.24"/><rect x="1240" y="114" width="1" height="1" fill="#0451a5" fill-opacity="0.24"/><rect x="1242" y="114" width="4" height="1" fill="#0451a5" fill-opacity="0.06"/><rect x="1205" y="115" width="11" height="1" fill="#008080" fill-opacity="0.61"/><rect x="1216" y="115" width="1" height="1" fill="#000000" fill-opacity="0.17"/><rect x="1218" y="115" width="4" height="1" fill="#0451a5" fill-opacity="0.58"/><rect x="1223" y="115" width="2" height="1" fill="#0451a5" fill-opacity="0.58"/><rect x="1226" y="115" width="3" height="1" fill="#0451a5" fill-opacity="0.58"/><rect x="1230" y="115" width="9" height="1" fill="#0451a5" fill-opacity="0.58"/><rect x="1240" y="115" width="1" height="1" fill="#0451a5" fill-opacity="0.58"/><rect x="1242" y="115" width="4" height="1" fill="#0451a5" fill-opacity="0.58"/><rect x="1205" y="116" width="1" height="1" fill="#008080" fill-opacity="0.26"/><rect x="1206" y="116" width="2" height="1" fill="#008080" fill-opacity="0.07"/><rect x="1208" y="116" width="1" height="1" fill="#008080" fill-opacity="0.26"/><rect x="1209" y="116" width="1" height="1" fill="#008080" fill-opacity="0.07"/><rect x="1210" y="116" width="1" height="1" fill="#000000" fill-opacity="0.07"/><rect x="1205" y="117" width="5" height="1" fill="#008080" fill-opacity="0.61"/><rect x="1210" y="117" width="1" height="1" fill="#000000" fill-opacity="0.17"/><rect x="1207" y="118" width="1" height="1" fill="#000000" fill-opacity="0.04"/><rect x="1209" y="118" width="5" height="1" fill="#008080" fill-opacity="0.07"/><rect x="1214" y="118" width="1" height="1" fill="#008080" fill-opacity="0.26"/><rect x="1215" y="118" width="1" height="1" fill="#008080" fill-opacity="0.07"/><rect x="1216" y="118" width="1" height="1" fill="#008080" fill-opacity="0.26"/><rect x="1217" y="118" width="3" height="1" fill="#008080" fill-opacity="0.07"/><rect x="1220" y="118" width="1" height="1" fill="#008080" fill-opacity="0.26"/><rect x="1221" y="118" width="3" height="1" fill="#008080" fill-opacity="0.07"/><rect x="1224" y="118" width="1" height="1" fill="#000000" fill-opacity="0.07"/><rect x="1207" y="119" width="1" height="1" fill="#000000" fill-opacity="0.17"/><rect x="1209" y="119" width="8" height="1" fill="#008080" fill-opacity="0.61"/><rect x="1217" y="119" width="1" height="1" fill="#008080" fill-opacity="0.34"/><rect x="1218" y="119" width="6" height="1" fill="#008080" fill-opacity="0.61"/><rect x="1224" y="119" width="1" height="1" fill="#000000" fill-opacity="0.17"/><rect x="1211" y="120" width="2" height="1" fill="#008080" fill-opacity="0.07"/><rect x="1213" y="120" width="1" height="1" fill="#008080" fill-opacity="0.26"/><rect x="1214" y="120" width="3" height="1" fill="#008080" fill-opacity="0.07"/><rect x="1217" y="120" width="1" height="1" fill="#000000" fill-opacity="0.07"/><rect x="1219" y="120" width="1" height="1" fill="#0451a5" fill-opacity="0.24"/><rect x="1220" y="120" width="1" height="1" fill="#0451a5" fill-opacity="0.32"/><rect x="1221" y="120" width="1" height="1" fill="#0451a5" fill-opacity="0.24"/><rect x="1222" y="120" width="1" height="1" fill="#0451a5" fill-opacity="0.06"/><rect x="1223" y="120" width="2" height="1" fill="#0451a5" fill-opacity="0.24"/><rect x="1225" y="120" width="2" height="1" fill="#0451a5" fill-opacity="0.06"/><rect x="1228" y="120" width="1" height="1" fill="#0451a5" fill-opacity="0.24"/><rect x="1229" y="120" width="3" height="1" fill="#0451a5" fill-opacity="0.06"/><rect x="1232" y="120" width="1" height="1" fill="#0451a5" fill-opacity="0.24"/><rect x="1233" y="120" width="2" height="1" fill="#0451a5" fill-opacity="0.06"/><rect x="1235" y="120" width="1" height="1" fill="#0451a5" fill-opacity="0.24"/><rect x="1236" y="120" width="1" height="1" fill="#0451a5" fill-opacity="0.32"/><rect x="1237" y="120" width="1" height="1" fill="#000000" fill-opacity="0.04"/><rect x="1211" y="121" width="6" height="1" fill="#008080" fill-opacity="0.61"/><rect x="1217" y="121" width="1" height="1" fill="#000000" fill-opacity="0.17"/><rect x="1219" y="121" width="1" height="1" fill="#0451a5" fill-opacity="0.58"/><rect x="1220" y="121" width="1" height="1" fill="#0451a5" fill-opacity="0.04"/><rect x="1221" y="121" width="6" height="1" fill="#0451a5" fill-opacity="0.58"/><rect x="1228" y="121" width="8" height="1" fill="#0451a5" fill-opacity="0.58"/><rect x="1236" y="121" width="1" height="1" fill="#0451a5" fill-opacity="0.04"/><rect x="1237" y="121" width="1" height="1" fill="#000000" fill-opacity="0.17"/><rect x="1219" y="122" width="1" height="1" fill="#0451a5" fill-opacity="0.32"/><rect x="1220" y="122" width="1" height="1" fill="#0451a5" fill-opacity="0.24"/><rect x="1221" y="122" width="1" height="1" fill="#0451a5" fill-opacity="0.06"/><rect x="1222" y="122" width="1" height="1" fill="#0451a5" fill-opacity="0.24"/><rect x="1223" y="122" width="2" height="1" fill="#0451a5" fill-opacity="0.06"/><rect x="1225" y="122" width="1" height="1" fill="#0451a5" fill-opacity="0.24"/><rect x="1226" y="122" width="1" height="1" fill="#0451a5" fill-opacity="0.06"/><rect x="1228" y="122" width="4" height="1" fill="#0451a5" fill-opacity="0.06"/><rect x="1232" y="122" width="1" height="1" fill="#0451a5" fill-opacity="0.32"/><rect x="1233" y="122" width="1" height="1" fill="#000000" fill-opacity="0.04"/><rect x="1219" y="123" width="1" height="1" fill="#0451a5" fill-opacity="0.04"/><rect x="1220" y="123" width="7" height="1" fill="#0451a5" fill-opacity="0.58"/><rect x="1228" y="123" width="4" height="1" fill="#0451a5" fill-opacity="0.58"/><rect x="1232" y="123" width="1" height="1" fill="#0451a5" fill-opacity="0.04"/><rect x="1233" y="123" width="1" height="1" fill="#000000" fill-opacity="0.17"/><rect x="1219" y="124" width="1" height="1" fill="#0451a5" fill-opacity="0.32"/><rect x="1220" y="124" width="2" height="1" fill="#0451a5" fill-opacity="0.24"/><rect x="1222" y="124" width="3" height="1" fill="#0451a5" fill-opacity="0.06"/><rect x="1225" y="124" width="1" height="1" fill="#0451a5" fill-opacity="0.24"/><rect x="1227" y="124" width="4" height="1" fill="#0451a5" fill-opacity="0.06"/><rect x="1231" y="124" width="1" height="1" fill="#0451a5" fill-opacity="0.32"/><rect x="1232" y="124" width="1" height="1" fill="#000000" fill-opacity="0.04"/><rect x="1219" y="125" width="1" height="1" fill="#0451a5" fill-opacity="0.04"/><rect x="1220" y="125" width="6" height="1" fill="#0451a5" fill-opacity="0.58"/><rect x="1227" y="125" width="4" height="1" fill="#0451a5" fill-opacity="0.58"/><rect x="1231" y="125" width="1" height="1" fill="#0451a5" fill-opacity="0.04"/><rect x="1232" y="125" width="1" height="1" fill="#000000" fill-opacity="0.17"/><rect x="1219" y="126" width="1" height="1" fill="#0451a5" fill-opacity="0.32"/><rect x="1220" y="126" width="1" height="1" fill="#0451a5" fill-opacity="0.24"/><rect x="1221" y="126" width="1" height="1" fill="#0451a5" fill-opacity="0.06"/><rect x="1222" y="126" width="1" height="1" fill="#0451a5" fill-opacity="0.24"/><rect x="1223" y="126" width="1" height="1" fill="#0451a5" fill-opacity="0.06"/><rect x="1224" y="126" width="1" height="1" fill="#0451a5" fill-opacity="0.24"/><rect x="1226" y="126" width="4" height="1" fill="#0451a5" fill-opacity="0.06"/><rect x="1230" y="126" width="1" height="1" fill="#0451a5" fill-opacity="0.32"/><rect x="1231" y="126" width="1" height="1" fill="#0451a5" fill-opacity="0.24"/><rect x="1219" y="127" width="1" height="1" fill="#0451a5" fill-opacity="0.04"/><rect x="1220" y="127" width="5" height="1" fill="#0451a5" fill-opacity="0.58"/><rect x="1226" y="127" width="4" height="1" fill="#0451a5" fill-opacity="0.58"/><rect x="1230" y="127" width="1" height="1" fill="#0451a5" fill-opacity="0.04"/><rect x="1231" y="127" width="1" height="1" fill="#0451a5" fill-opacity="0.58"/><rect x="1203" y="128" width="1" height="1" fill="#000000" fill-opacity="0.04"/><rect x="1205" y="128" width="4" height="1" fill="#008080" fill-opacity="0.07"/><rect x="1209" y="128" width="1" height="1" fill="#000000" fill-opacity="0.07"/><rect x="1211" y="128" width="1" height="1" fill="#0451a5" fill-opacity="0.06"/><rect x="1212" y="128" width="1" height="1" fill="#0451a5" fill-opacity="0.24"/><rect x="1213" y="128" width="1" height="1" fill="#0451a5" fill-opacity="0.06"/><rect x="1214" y="128" width="1" height="1" fill="#0451a5" fill-opacity="0.24"/><rect x="1215" y="128" width="5" height="1" fill="#0451a5" fill-opacity="0.06"/><rect x="1220" y="128" width="1" height="1" fill="#0451a5" fill-opacity="0.24"/><rect x="1221" y="128" width="1" height="1" fill="#0451a5" fill-opacity="0.06"/><rect x="1222" y="128" width="2" height="1" fill="#0451a5" fill-opacity="0.24"/><rect x="1224" y="128" width="1" height="1" fill="#0451a5" fill-opacity="0.06"/><rect x="1203" y="129" width="1" height="1" fill="#000000" fill-opacity="0.17"/><rect x="1205" y="129" width="4" height="1" fill="#008080" fill-opacity="0.61"/><rect x="1209" y="129" width="1" height="1" fill="#000000" fill-opacity="0.17"/><rect x="1211" y="129" width="7" height="1" fill="#0451a5" fill-opacity="0.58"/><rect x="1218" y="129" width="1" height="1" fill="#0451a5" fill-opacity="0.32"/><rect x="1219" y="129" width="6" height="1" fill="#0451a5" fill-opacity="0.58"/><rect x="1205" y="130" width="1" height="1" fill="#008080" fill-opacity="0.26"/><rect x="1206" y="130" width="4" height="1" fill="#008080" fill-opacity="0.07"/><rect x="1210" y="130" width="1" height="1" fill="#008080" fill-opacity="0.26"/><rect x="1211" y="130" width="1" height="1" fill="#008080" fill-opacity="0.07"/><rect x="1212" y="130" width="2" height="1" fill="#008080" fill-opacity="0.26"/><rect x="1214" y="130" width="2" height="1" fill="#008080" fill-opacity="0.07"/><rect x="1216" y="130" width="1" height="1" fill="#000000" fill-opacity="0.07"/><rect x="1218" y="130" width="1" height="1" fill="#0451a5" fill-opacity="0.32"/><rect x="1219" y="130" width="2" height="1" fill="#0451a5" fill-opacity="0.24"/><rect x="1222" y="130" width="1" height="1" fill="#0451a5" fill-opacity="0.24"/><rect x="1223" y="130" width="2" height="1" fill="#0451a5" fill-opacity="0.06"/><rect x="1225" y="130" width="1" height="1" fill="#0451a5" fill-opacity="0.24"/><rect x="1226" y="130" width="1" height="1" fill="#0451a5" fill-opacity="0.32"/><rect x="1227" y="130" width="2" height="1" fill="#0451a5" fill-opacity="0.24"/><rect x="1229" y="130" width="2" height="1" fill="#0451a5" fill-opacity="0.06"/><rect x="1231" y="130" width="2" height="1" fill="#0451a5" fill-opacity="0.24"/><rect x="1233" y="130" width="1" height="1" fill="#0451a5" fill-opacity="0.06"/><rect x="1234" y="130" width="2" height="1" fill="#0451a5" fill-opacity="0.24"/><rect x="1236" y="130" width="4" height="1" fill="#0451a5" fill-opacity="0.06"/><rect x="1240" y="130" width="1" height="1" fill="#0451a5" fill-opacity="0.24"/><rect x="1241" y="130" width="5" height="1" fill="#0451a5" fill-opacity="0.06"/><rect x="1246" y="130" width="1" height="1" fill="#0451a5" fill-opacity="0.24"/><rect x="1247" y="130" width="1" height="1" fill="#0451a5" fill-opacity="0.06"/><rect x="1248" y="130" width="1" height="1" fill="#0451a5" fill-opacity="0.24"/><rect x="1249" y="130" width="5" height="1" fill="#0451a5" fill-opacity="0.06"/><rect x="1254" y="130" width="1" height="1" fill="#0451a5" fill-opacity="0.24"/><rect x="1255" y="130" width="1" height="1" fill="#0451a5" fill-opacity="0.06"/><rect x="1256" y="130" width="2" height="1" fill="#0451a5" fill-opacity="0.24"/><rect x="1258" y="130" width="1" height="1" fill="#0451a5" fill-opacity="0.06"/><rect x="1259" y="130" width="1" height="1" fill="#0451a5" fill-opacity="0.32"/><rect x="1260" y="130" width="1" height="1" fill="#0451a5" fill-opacity="0.24"/><rect x="1262" y="130" width="2" height="1" fill="#0451a5" fill-opacity="0.24"/><rect x="1264" y="130" width="1" height="1" fill="#0451a5" fill-opacity="0.32"/><rect x="1205" y="131" width="11" height="1" fill="#008080" fill-opacity="0.61"/><rect x="1216" y="131" width="1" height="1" fill="#000000" fill-opacity="0.17"/><rect x="1218" y="131" width="1" height="1" fill="#0451a5" fill-opacity="0.04"/><rect x="1219" y="131" width="2" height="1" fill="#0451a5" fill-opacity="0.58"/><rect x="1222" y="131" width="4" height="1" fill="#0451a5" fill-opacity="0.58"/><rect x="1226" y="131" width="1" height="1" fill="#0451a5" fill-opacity="0.04"/><rect x="1227" y="131" width="3" height="1" fill="#0451a5" fill-opacity="0.58"/><rect x="1230" y="131" width="1" height="1" fill="#0451a5" fill-opacity="0.32"/><rect x="1231" y="131" width="7" height="1" fill="#0451a5" fill-opacity="0.58"/><rect x="1238" y="131" width="1" height="1" fill="#0451a5" fill-opacity="0.32"/><rect x="1239" y="131" width="5" height="1" fill="#0451a5" fill-opacity="0.58"/><rect x="1244" y="131" width="1" height="1" fill="#0451a5" fill-opacity="0.32"/><rect x="1245" y="131" width="7" height="1" fill="#0451a5" fill-opacity="0.58"/><rect x="1252" y="131" width="1" height="1" fill="#0451a5" fill-opacity="0.32"/><rect x="1253" y="131" width="6" height="1" fill="#0451a5" fill-opacity="0.58"/><rect x="1259" y="131" width="1" height="1" fill="#0451a5" fill-opacity="0.04"/><rect x="1260" y="131" width="1" height="1" fill="#0451a5" fill-opacity="0.58"/><rect x="1262" y="131" width="2" height="1" fill="#0451a5" fill-opacity="0.58"/><rect x="1264" y="131" width="1" height="1" fill="#0451a5" fill-opacity="0.04"/><rect x="1205" y="132" width="1" height="1" fill="#008080" fill-opacity="0.26"/><rect x="1206" y="132" width="2" height="1" fill="#008080" fill-opacity="0.07"/><rect x="1208" y="132" width="1" height="1" fill="#008080" fill-opacity="0.26"/><rect x="1209" y="132" width="1" height="1" fill="#008080" fill-opacity="0.07"/><rect x="1210" y="132" width="1" height="1" fill="#000000" fill-opacity="0.07"/><rect x="1205" y="133" width="5" height="1" fill="#008080" fill-opacity="0.61"/><rect x="1210" y="133" width="1" height="1" fill="#000000" fill-opacity="0.17"/><rect x="1207" y="134" width="1" height="1" fill="#000000" fill-opacity="0.04"/><rect x="1209" y="134" width="3" height="1" fill="#0451a5" fill-opacity="0.06"/><rect x="1212" y="134" width="3" height="1" fill="#0451a5" fill-opacity="0.24"/><rect x="1215" y="134" width="5" height="1" fill="#0451a5" fill-opacity="0.06"/><rect x="1220" y="134" width="1" height="1" fill="#0451a5" fill-opacity="0.24"/><rect x="1221" y="134" width="2" height="1" fill="#0451a5" fill-opacity="0.06"/><rect x="1207" y="135" width="1" height="1" fill="#000000" fill-opacity="0.17"/><rect x="1209" y="135" width="8" height="1" fill="#0451a5" fill-opacity="0.58"/><rect x="1217" y="135" width="1" height="1" fill="#0451a5" fill-opacity="0.32"/><rect x="1218" y="135" width="5" height="1" fill="#0451a5" fill-opacity="0.58"/><rect x="1199" y="136" width="1" height="1" fill="#000000" fill-opacity="0.04"/><rect x="1201" y="136" width="4" height="1" fill="#008080" fill-opacity="0.07"/><rect x="1205" y="136" width="1" height="1" fill="#000000" fill-opacity="0.07"/><rect x="1207" y="136" width="2" height="1" fill="#0451a5" fill-opacity="0.24"/><rect x="1209" y="136" width="2" height="1" fill="#0451a5" fill-opacity="0.06"/><rect x="1211" y="136" width="1" height="1" fill="#0451a5" fill-opacity="0.24"/><rect x="1212" y="136" width="2" height="1" fill="#0451a5" fill-opacity="0.06"/><rect x="1214" y="136" width="1" height="1" fill="#0451a5" fill-opacity="0.24"/><rect x="1215" y="136" width="3" height="1" fill="#0451a5" fill-opacity="0.06"/><rect x="1218" y="136" width="1" height="1" fill="#0451a5" fill-opacity="0.24"/><rect x="1219" y="136" width="3" height="1" fill="#0451a5" fill-opacity="0.06"/><rect x="1199" y="137" width="1" height="1" fill="#000000" fill-opacity="0.17"/><rect x="1201" y="137" width="4" height="1" fill="#008080" fill-opacity="0.61"/><rect x="1205" y="137" width="1" height="1" fill="#000000" fill-opacity="0.17"/><rect x="1207" y="137" width="3" height="1" fill="#0451a5" fill-opacity="0.58"/><rect x="1210" y="137" width="1" height="1" fill="#0451a5" fill-opacity="0.32"/><rect x="1211" y="137" width="5" height="1" fill="#0451a5" fill-opacity="0.58"/><rect x="1216" y="137" width="1" height="1" fill="#0451a5" fill-opacity="0.32"/><rect x="1217" y="137" width="5" height="1" fill="#0451a5" fill-opacity="0.58"/><rect x="1201" y="138" width="2" height="1" fill="#008080" fill-opacity="0.07"/><rect x="1203" y="138" width="1" height="1" fill="#008080" fill-opacity="0.26"/><rect x="1204" y="138" width="4" height="1" fill="#008080" fill-opacity="0.07"/><rect x="1208" y="138" width="1" height="1" fill="#000000" fill-opacity="0.07"/><rect x="1201" y="139" width="7" height="1" fill="#008080" fill-opacity="0.61"/><rect x="1208" y="139" width="1" height="1" fill="#000000" fill-opacity="0.17"/><rect x="1203" y="140" width="1" height="1" fill="#000000" fill-opacity="0.04"/><rect x="1205" y="140" width="4" height="1" fill="#008080" fill-opacity="0.07"/><rect x="1209" y="140" width="1" height="1" fill="#000000" fill-opacity="0.07"/><rect x="1211" y="140" width="1" height="1" fill="#0451a5" fill-opacity="0.24"/><rect x="1212" y="140" width="2" height="1" fill="#0451a5" fill-opacity="0.06"/><rect x="1214" y="140" width="1" height="1" fill="#0451a5" fill-opacity="0.24"/><rect x="1215" y="140" width="1" height="1" fill="#0451a5" fill-opacity="0.06"/><rect x="1216" y="140" width="2" height="1" fill="#0451a5" fill-opacity="0.24"/><rect x="1203" y="141" width="1" height="1" fill="#000000" fill-opacity="0.17"/><rect x="1205" y="141" width="4" height="1" fill="#008080" fill-opacity="0.61"/><rect x="1209" y="141" width="1" height="1" fill="#000000" fill-opacity="0.17"/><rect x="1211" y="141" width="4" height="1" fill="#0451a5" fill-opacity="0.58"/><rect x="1215" y="141" width="1" height="1" fill="#0451a5" fill-opacity="0.32"/><rect x="1216" y="141" width="2" height="1" fill="#0451a5" fill-opacity="0.58"/><rect x="1205" y="142" width="1" height="1" fill="#008080" fill-opacity="0.26"/><rect x="1206" y="142" width="2" height="1" fill="#008080" fill-opacity="0.07"/><rect x="1208" y="142" width="1" height="1" fill="#008080" fill-opacity="0.26"/><rect x="1209" y="142" width="1" height="1" fill="#008080" fill-opacity="0.07"/><rect x="1210" y="142" width="1" height="1" fill="#000000" fill-opacity="0.07"/><rect x="1205" y="143" width="5" height="1" fill="#008080" fill-opacity="0.61"/><rect x="1210" y="143" width="1" height="1" fill="#000000" fill-opacity="0.17"/><rect x="1207" y="144" width="1" height="1" fill="#000000" fill-opacity="0.04"/><rect x="1209" y="144" width="2" height="1" fill="#0451a5" fill-opacity="0.06"/><rect x="1211" y="144" width="1" height="1" fill="#0451a5" fill-opacity="0.24"/><rect x="1212" y="144" width="3" height="1" fill="#0451a5" fill-opacity="0.06"/><rect x="1215" y="144" width="2" height="1" fill="#0451a5" fill-opacity="0.24"/><rect x="1207" y="145" width="1" height="1" fill="#000000" fill-opacity="0.17"/><rect x="1209" y="145" width="3" height="1" fill="#0451a5" fill-opacity="0.58"/><rect x="1212" y="145" width="1" height="1" fill="#0451a5" fill-opacity="0.32"/><rect x="1213" y="145" width="4" height="1" fill="#0451a5" fill-opacity="0.58"/><rect x="1207" y="146" width="1" height="1" fill="#000000" fill-opacity="0.04"/><rect x="1209" y="146" width="2" height="1" fill="#0451a5" fill-opacity="0.06"/><rect x="1211" y="146" width="1" height="1" fill="#0451a5" fill-opacity="0.24"/><rect x="1212" y="146" width="3" height="1" fill="#0451a5" fill-opacity="0.06"/><rect x="1207" y="147" width="1" height="1" fill="#000000" fill-opacity="0.17"/><rect x="1209" y="147" width="6" height="1" fill="#0451a5" fill-opacity="0.58"/><rect x="1203" y="148" width="1" height="1" fill="#000000" fill-opacity="0.04"/><rect x="1205" y="148" width="4" height="1" fill="#008080" fill-opacity="0.07"/><rect x="1209" y="148" width="1" height="1" fill="#000000" fill-opacity="0.07"/><rect x="1211" y="148" width="1" height="1" fill="#0451a5" fill-opacity="0.24"/><rect x="1212" y="148" width="2" height="1" fill="#0451a5" fill-opacity="0.06"/><rect x="1214" y="148" width="1" height="1" fill="#0451a5" fill-opacity="0.24"/><rect x="1215" y="148" width="5" height="1" fill="#0451a5" fill-opacity="0.06"/><rect x="1203" y="149" width="1" height="1" fill="#000000" fill-opacity="0.17"/><rect x="1205" y="149" width="4" height="1" fill="#008080" fill-opacity="0.61"/><rect x="1209" y="149" width="1" height="1" fill="#000000" fill-opacity="0.17"/><rect x="1211" y="149" width="4" height="1" fill="#0451a5" fill-opacity="0.58"/><rect x="1215" y="149" width="1" height="1" fill="#0451a5" fill-opacity="0.32"/><rect x="1216" y="149" width="4" height="1" fill="#0451a5" fill-opacity="0.58"/><rect x="1205" y="150" width="1" height="1" fill="#008080" fill-opacity="0.26"/><rect x="1206" y="150" width="2" height="1" fill="#008080" fill-opacity="0.07"/><rect x="1208" y="150" width="1" height="1" fill="#008080" fill-opacity="0.26"/><rect x="1209" y="150" width="1" height="1" fill="#008080" fill-opacity="0.07"/><rect x="1210" y="150" width="1" height="1" fill="#000000" fill-opacity="0.07"/><rect x="1205" y="151" width="5" height="1" fill="#008080" fill-opacity="0.61"/><rect x="1210" y="151" width="1" height="1" fill="#000000" fill-opacity="0.17"/><rect x="1207" y="152" width="1" height="1" fill="#000000" fill-opacity="0.04"/><rect x="1209" y="152" width="2" height="1" fill="#0451a5" fill-opacity="0.06"/><rect x="1211" y="152" width="1" height="1" fill="#0451a5" fill-opacity="0.24"/><rect x="1212" y="152" width="3" height="1" fill="#0451a5" fill-opacity="0.06"/><rect x="1215" y="152" width="2" height="1" fill="#0451a5" fill-opacity="0.24"/><rect x="1207" y="153" width="1" height="1" fill="#000000" fill-opacity="0.17"/><rect x="1209" y="153" width="3" height="1" fill="#0451a5" fill-opacity="0.58"/><rect x="1212" y="153" width="1" height="1" fill="#0451a5" fill-opacity="0.32"/><rect x="1213" y="153" width="4" height="1" fill="#0451a5" fill-opacity="0.58"/><rect x="1203" y="156" width="1" height="1" fill="#000000" fill-opacity="0.04"/><rect x="1205" y="156" width="4" height="1" fill="#008080" fill-opacity="0.07"/><rect x="1209" y="156" width="1" height="1" fill="#000000" fill-opacity="0.07"/><rect x="1211" y="156" width="1" height="1" fill="#0451a5" fill-opacity="0.24"/><rect x="1212" y="156" width="7" height="1" fill="#0451a5" fill-opacity="0.06"/><rect x="1219" y="156" width="1" height="1" fill="#0451a5" fill-opacity="0.24"/><rect x="1220" y="156" width="2" height="1" fill="#0451a5" fill-opacity="0.06"/><rect x="1222" y="156" width="1" height="1" fill="#0451a5" fill-opacity="0.24"/><rect x="1203" y="157" width="1" height="1" fill="#000000" fill-opacity="0.17"/><rect x="1205" y="157" width="4" height="1" fill="#008080" fill-opacity="0.61"/><rect x="1209" y="157" width="1" height="1" fill="#000000" fill-opacity="0.17"/><rect x="1211" y="157" width="2" height="1" fill="#0451a5" fill-opacity="0.58"/><rect x="1213" y="157" width="1" height="1" fill="#0451a5" fill-opacity="0.32"/><rect x="1214" y="157" width="9" height="1" fill="#0451a5" fill-opacity="0.58"/><rect x="1205" y="158" width="1" height="1" fill="#008080" fill-opacity="0.26"/><rect x="1206" y="158" width="2" height="1" fill="#008080" fill-opacity="0.07"/><rect x="1208" y="158" width="1" height="1" fill="#008080" fill-opacity="0.26"/><rect x="1209" y="158" width="1" height="1" fill="#008080" fill-opacity="0.07"/><rect x="1210" y="158" width="1" height="1" fill="#000000" fill-opacity="0.07"/><rect x="1205" y="159" width="5" height="1" fill="#008080" fill-opacity="0.61"/><rect x="1210" y="159" width="1" height="1" fill="#000000" fill-opacity="0.17"/><rect x="1207" y="160" width="1" height="1" fill="#000000" fill-opacity="0.04"/><rect x="1209" y="160" width="5" height="1" fill="#008080" fill-opacity="0.07"/><rect x="1214" y="160" width="1" height="1" fill="#008080" fill-opacity="0.26"/><rect x="1215" y="160" width="1" height="1" fill="#008080" fill-opacity="0.07"/><rect x="1216" y="160" width="1" height="1" fill="#008080" fill-opacity="0.26"/><rect x="1217" y="160" width="3" height="1" fill="#008080" fill-opacity="0.07"/><rect x="1220" y="160" width="1" height="1" fill="#008080" fill-opacity="0.26"/><rect x="1221" y="160" width="3" height="1" fill="#008080" fill-opacity="0.07"/><rect x="1224" y="160" width="1" height="1" fill="#000000" fill-opacity="0.07"/><rect x="1207" y="161" width="1" height="1" fill="#000000" fill-opacity="0.17"/><rect x="1209" y="161" width="8" height="1" fill="#008080" fill-opacity="0.61"/><rect x="1217" y="161" width="1" height="1" fill="#008080" fill-opacity="0.34"/><rect x="1218" y="161" width="6" height="1" fill="#008080" fill-opacity="0.61"/><rect x="1224" y="161" width="1" height="1" fill="#000000" fill-opacity="0.17"/><rect x="1211" y="162" width="2" height="1" fill="#008080" fill-opacity="0.07"/><rect x="1213" y="162" width="1" height="1" fill="#008080" fill-opacity="0.26"/><rect x="1214" y="162" width="3" height="1" fill="#008080" fill-opacity="0.07"/><rect x="1217" y="162" width="1" height="1" fill="#000000" fill-opacity="0.07"/><rect x="1219" y="162" width="1" height="1" fill="#0451a5" fill-opacity="0.24"/><rect x="1220" y="162" width="1" height="1" fill="#0451a5" fill-opacity="0.32"/><rect x="1221" y="162" width="1" height="1" fill="#0451a5" fill-opacity="0.24"/><rect x="1222" y="162" width="1" height="1" fill="#0451a5" fill-opacity="0.32"/><rect x="1223" y="162" width="1" height="1" fill="#000000" fill-opacity="0.04"/><rect x="1225" y="162" width="1" height="1" fill="#0451a5" fill-opacity="0.32"/><rect x="1226" y="162" width="1" height="1" fill="#0451a5" fill-opacity="0.24"/><rect x="1227" y="162" width="1" height="1" fill="#0451a5" fill-opacity="0.32"/><rect x="1228" y="162" width="1" height="1" fill="#0451a5" fill-opacity="0.24"/><rect x="1211" y="163" width="6" height="1" fill="#008080" fill-opacity="0.61"/><rect x="1217" y="163" width="1" height="1" fill="#000000" fill-opacity="0.17"/><rect x="1219" y="163" width="1" height="1" fill="#0451a5" fill-opacity="0.58"/><rect x="1220" y="163" width="1" height="1" fill="#0451a5" fill-opacity="0.04"/><rect x="1221" y="163" width="1" height="1" fill="#0451a5" fill-opacity="0.58"/><rect x="1222" y="163" width="1" height="1" fill="#0451a5" fill-opacity="0.04"/><rect x="1223" y="163" width="1" height="1" fill="#000000" fill-opacity="0.17"/><rect x="1225" y="163" width="1" height="1" fill="#0451a5" fill-opacity="0.04"/><rect x="1226" y="163" width="1" height="1" fill="#0451a5" fill-opacity="0.58"/><rect x="1227" y="163" width="1" height="1" fill="#0451a5" fill-opacity="0.04"/><rect x="1228" y="163" width="1" height="1" fill="#0451a5" fill-opacity="0.58"/><rect x="1199" y="164" width="1" height="1" fill="#000000" fill-opacity="0.04"/><rect x="1201" y="164" width="4" height="1" fill="#008080" fill-opacity="0.07"/><rect x="1205" y="164" width="1" height="1" fill="#000000" fill-opacity="0.07"/><rect x="1207" y="164" width="1" height="1" fill="#0451a5" fill-opacity="0.24"/><rect x="1208" y="164" width="1" height="1" fill="#0451a5" fill-opacity="0.06"/><rect x="1209" y="164" width="1" height="1" fill="#0451a5" fill-opacity="0.24"/><rect x="1210" y="164" width="4" height="1" fill="#0451a5" fill-opacity="0.06"/><rect x="1214" y="164" width="1" height="1" fill="#0451a5" fill-opacity="0.24"/><rect x="1215" y="164" width="3" height="1" fill="#0451a5" fill-opacity="0.06"/><rect x="1199" y="165" width="1" height="1" fill="#000000" fill-opacity="0.17"/><rect x="1201" y="165" width="4" height="1" fill="#008080" fill-opacity="0.61"/><rect x="1205" y="165" width="1" height="1" fill="#000000" fill-opacity="0.17"/><rect x="1207" y="165" width="3" height="1" fill="#0451a5" fill-opacity="0.58"/><rect x="1210" y="165" width="1" height="1" fill="#0451a5" fill-opacity="0.32"/><rect x="1211" y="165" width="7" height="1" fill="#0451a5" fill-opacity="0.58"/><rect x="1201" y="166" width="2" height="1" fill="#008080" fill-opacity="0.07"/><rect x="1203" y="166" width="1" height="1" fill="#008080" fill-opacity="0.26"/><rect x="1204" y="166" width="4" height="1" fill="#008080" fill-opacity="0.07"/><rect x="1208" y="166" width="1" height="1" fill="#000000" fill-opacity="0.07"/><rect x="1201" y="167" width="7" height="1" fill="#008080" fill-opacity="0.61"/><rect x="1208" y="167" width="1" height="1" fill="#000000" fill-opacity="0.17"/><rect x="1203" y="168" width="1" height="1" fill="#000000" fill-opacity="0.04"/><rect x="1205" y="168" width="4" height="1" fill="#008080" fill-opacity="0.07"/><rect x="1209" y="168" width="1" height="1" fill="#000000" fill-opacity="0.07"/><rect x="1211" y="168" width="2" height="1" fill="#0451a5" fill-opacity="0.24"/><rect x="1213" y="168" width="1" height="1" fill="#0451a5" fill-opacity="0.06"/><rect x="1214" y="168" width="2" height="1" fill="#0451a5" fill-opacity="0.24"/><rect x="1216" y="168" width="3" height="1" fill="#0451a5" fill-opacity="0.06"/><rect x="1219" y="168" width="2" height="1" fill="#0451a5" fill-opacity="0.24"/><rect x="1203" y="169" width="1" height="1" fill="#000000" fill-opacity="0.17"/><rect x="1205" y="169" width="4" height="1" fill="#008080" fill-opacity="0.61"/><rect x="1209" y="169" width="1" height="1" fill="#000000" fill-opacity="0.17"/><rect x="1211" y="169" width="7" height="1" fill="#0451a5" fill-opacity="0.58"/><rect x="1218" y="169" width="1" height="1" fill="#0451a5" fill-opacity="0.32"/><rect x="1219" y="169" width="2" height="1" fill="#0451a5" fill-opacity="0.58"/><rect x="1205" y="170" width="1" height="1" fill="#008080" fill-opacity="0.26"/><rect x="1206" y="170" width="2" height="1" fill="#008080" fill-opacity="0.07"/><rect x="1208" y="170" width="1" height="1" fill="#008080" fill-opacity="0.26"/><rect x="1209" y="170" width="1" height="1" fill="#008080" fill-opacity="0.07"/><rect x="1210" y="170" width="1" height="1" fill="#000000" fill-opacity="0.07"/><rect x="1205" y="171" width="5" height="1" fill="#008080" fill-opacity="0.61"/><rect x="1210" y="171" width="1" height="1" fill="#000000" fill-opacity="0.17"/><rect x="1207" y="172" width="1" height="1" fill="#000000" fill-opacity="0.04"/><rect x="1209" y="172" width="2" height="1" fill="#008080" fill-opacity="0.07"/><rect x="1211" y="172" width="1" height="1" fill="#008080" fill-opacity="0.26"/><rect x="1212" y="172" width="1" height="1" fill="#008080" fill-opacity="0.07"/><rect x="1213" y="172" width="2" height="1" fill="#008080" fill-opacity="0.26"/><rect x="1215" y="172" width="3" height="1" fill="#008080" fill-opacity="0.07"/><rect x="1218" y="172" width="2" height="1" fill="#008080" fill-opacity="0.26"/><rect x="1220" y="172" width="2" height="1" fill="#008080" fill-opacity="0.07"/><rect x="1222" y="172" width="1" height="1" fill="#000000" fill-opacity="0.07"/><rect x="1207" y="173" width="1" height="1" fill="#000000" fill-opacity="0.17"/><rect x="1209" y="173" width="13" height="1" fill="#008080" fill-opacity="0.61"/><rect x="1222" y="173" width="1" height="1" fill="#000000" fill-opacity="0.17"/><rect x="1211" y="174" width="1" height="1" fill="#008080" fill-opacity="0.26"/><rect x="1212" y="174" width="1" height="1" fill="#008080" fill-opacity="0.07"/><rect x="1213" y="174" width="1" height="1" fill="#000000" fill-opacity="0.07"/><rect x="1215" y="174" width="2" height="1" fill="#0451a5" fill-opacity="0.06"/><rect x="1217" y="174" width="2" height="1" fill="#0451a5" fill-opacity="0.24"/><rect x="1219" y="174" width="1" height="1" fill="#0451a5" fill-opacity="0.32"/><rect x="1220" y="174" width="2" height="1" fill="#0451a5" fill-opacity="0.24"/><rect x="1222" y="174" width="2" height="1" fill="#0451a5" fill-opacity="0.06"/><rect x="1224" y="174" width="2" height="1" fill="#0451a5" fill-opacity="0.24"/><rect x="1226" y="174" width="1" height="1" fill="#0451a5" fill-opacity="0.06"/><rect x="1227" y="174" width="2" height="1" fill="#0451a5" fill-opacity="0.24"/><rect x="1229" y="174" width="5" height="1" fill="#0451a5" fill-opacity="0.06"/><rect x="1234" y="174" width="1" height="1" fill="#0451a5" fill-opacity="0.24"/><rect x="1235" y="174" width="3" height="1" fill="#0451a5" fill-opacity="0.06"/><rect x="1238" y="174" width="1" height="1" fill="#0451a5" fill-opacity="0.32"/><rect x="1239" y="174" width="1" height="1" fill="#0451a5" fill-opacity="0.24"/><rect x="1211" y="175" width="2" height="1" fill="#008080" fill-opacity="0.61"/><rect x="1213" y="175" width="1" height="1" fill="#000000" fill-opacity="0.17"/><rect x="1215" y="175" width="4" height="1" fill="#0451a5" fill-opacity="0.58"/><rect x="1219" y="175" width="1" height="1" fill="#0451a5" fill-opacity="0.04"/><rect x="1220" y="175" width="3" height="1" fill="#0451a5" fill-opacity="0.58"/><rect x="1223" y="175" width="1" height="1" fill="#0451a5" fill-opacity="0.32"/><rect x="1224" y="175" width="8" height="1" fill="#0451a5" fill-opacity="0.58"/><rect x="1232" y="175" width="1" height="1" fill="#0451a5" fill-opacity="0.32"/><rect x="1233" y="175" width="5" height="1" fill="#0451a5" fill-opacity="0.58"/><rect x="1238" y="175" width="1" height="1" fill="#0451a5" fill-opacity="0.04"/><rect x="1239" y="175" width="1" height="1" fill="#0451a5" fill-opacity="0.58"/><rect x="1211" y="176" width="2" height="1" fill="#008080" fill-opacity="0.26"/><rect x="1213" y="176" width="1" height="1" fill="#008080" fill-opacity="0.07"/><rect x="1214" y="176" width="2" height="1" fill="#008080" fill-opacity="0.26"/><rect x="1216" y="176" width="1" height="1" fill="#000000" fill-opacity="0.07"/><rect x="1218" y="176" width="2" height="1" fill="#0451a5" fill-opacity="0.24"/><rect x="1220" y="176" width="1" height="1" fill="#0451a5" fill-opacity="0.06"/><rect x="1221" y="176" width="2" height="1" fill="#0451a5" fill-opacity="0.24"/><rect x="1223" y="176" width="3" height="1" fill="#0451a5" fill-opacity="0.06"/><rect x="1226" y="176" width="2" height="1" fill="#0451a5" fill-opacity="0.24"/><rect x="1211" y="177" width="5" height="1" fill="#008080" fill-opacity="0.61"/><rect x="1216" y="177" width="1" height="1" fill="#000000" fill-opacity="0.17"/><rect x="1218" y="177" width="7" height="1" fill="#0451a5" fill-opacity="0.58"/><rect x="1225" y="177" width="1" height="1" fill="#0451a5" fill-opacity="0.32"/><rect x="1226" y="177" width="2" height="1" fill="#0451a5" fill-opacity="0.58"/><rect x="1203" y="180" width="1" height="1" fill="#000000" fill-opacity="0.04"/><rect x="1205" y="180" width="4" height="1" fill="#008080" fill-opacity="0.07"/><rect x="1209" y="180" width="1" height="1" fill="#000000" fill-opacity="0.07"/><rect x="1211" y="180" width="3" height="1" fill="#0451a5" fill-opacity="0.06"/><rect x="1214" y="180" width="1" height="1" fill="#0451a5" fill-opacity="0.24"/><rect x="1215" y="180" width="9" height="1" fill="#0451a5" fill-opacity="0.06"/><rect x="1203" y="181" width="1" height="1" fill="#000000" fill-opacity="0.17"/><rect x="1205" y="181" width="4" height="1" fill="#008080" fill-opacity="0.61"/><rect x="1209" y="181" width="1" height="1" fill="#000000" fill-opacity="0.17"/><rect x="1211" y="181" width="8" height="1" fill="#0451a5" fill-opacity="0.58"/><rect x="1219" y="181" width="1" height="1" fill="#0451a5" fill-opacity="0.32"/><rect x="1220" y="181" width="4" height="1" fill="#0451a5" fill-opacity="0.58"/><rect x="1205" y="182" width="1" height="1" fill="#008080" fill-opacity="0.26"/><rect x="1206" y="182" width="2" height="1" fill="#008080" fill-opacity="0.07"/><rect x="1208" y="182" width="1" height="1" fill="#008080" fill-opacity="0.26"/><rect x="1209" y="182" width="1" height="1" fill="#008080" fill-opacity="0.07"/><rect x="1210" y="182" width="1" height="1" fill="#000000" fill-opacity="0.07"/><rect x="1205" y="183" width="5" height="1" fill="#008080" fill-opacity="0.61"/><rect x="1210" y="183" width="1" height="1" fill="#000000" fill-opacity="0.17"/><rect x="1207" y="184" width="1" height="1" fill="#000000" fill-opacity="0.04"/><rect x="1209" y="184" width="2" height="1" fill="#0451a5" fill-opacity="0.06"/><rect x="1211" y="184" width="1" height="1" fill="#0451a5" fill-opacity="0.24"/><rect x="1212" y="184" width="3" height="1" fill="#0451a5" fill-opacity="0.06"/><rect x="1215" y="184" width="2" height="1" fill="#0451a5" fill-opacity="0.24"/><rect x="1207" y="185" width="1" height="1" fill="#000000" fill-opacity="0.17"/><rect x="1209" y="185" width="3" height="1" fill="#0451a5" fill-opacity="0.58"/><rect x="1212" y="185" width="1" height="1" fill="#0451a5" fill-opacity="0.32"/><rect x="1213" y="185" width="4" height="1" fill="#0451a5" fill-opacity="0.58"/><rect x="1203" y="188" width="1" height="1" fill="#000000" fill-opacity="0.04"/><rect x="1205" y="188" width="4" height="1" fill="#008080" fill-opacity="0.07"/><rect x="1209" y="188" width="1" height="1" fill="#000000" fill-opacity="0.07"/><rect x="1211" y="188" width="3" height="1" fill="#0451a5" fill-opacity="0.06"/><rect x="1214" y="188" width="1" height="1" fill="#0451a5" fill-opacity="0.24"/><rect x="1215" y="188" width="6" height="1" fill="#0451a5" fill-opacity="0.06"/><rect x="1221" y="188" width="2" height="1" fill="#0451a5" fill-opacity="0.24"/><rect x="1223" y="188" width="3" height="1" fill="#0451a5" fill-opacity="0.06"/><rect x="1226" y="188" width="1" height="1" fill="#0451a5" fill-opacity="0.24"/><rect x="1203" y="189" width="1" height="1" fill="#000000" fill-opacity="0.17"/><rect x="1205" y="189" width="4" height="1" fill="#008080" fill-opacity="0.61"/><rect x="1209" y="189" width="1" height="1" fill="#000000" fill-opacity="0.17"/><rect x="1211" y="189" width="6" height="1" fill="#0451a5" fill-opacity="0.58"/><rect x="1217" y="189" width="1" height="1" fill="#0451a5" fill-opacity="0.32"/><rect x="1218" y="189" width="9" height="1" fill="#0451a5" fill-opacity="0.58"/><rect x="1205" y="190" width="1" height="1" fill="#008080" fill-opacity="0.26"/><rect x="1206" y="190" width="2" height="1" fill="#008080" fill-opacity="0.07"/><rect x="1208" y="190" width="1" height="1" fill="#008080" fill-opacity="0.26"/><rect x="1209" y="190" width="1" height="1" fill="#008080" fill-opacity="0.07"/><rect x="1210" y="190" width="1" height="1" fill="#000000" fill-opacity="0.07"/><rect x="1205" y="191" width="5" height="1" fill="#008080" fill-opacity="0.61"/><rect x="1210" y="191" width="1" height="1" fill="#000000" fill-opacity="0.17"/><rect x="1207" y="192" width="1" height="1" fill="#000000" fill-opacity="0.04"/><rect x="1209" y="192" width="5" height="1" fill="#008080" fill-opacity="0.07"/><rect x="1214" y="192" width="1" height="1" fill="#008080" fill-opacity="0.26"/><rect x="1215" y="192" width="1" height="1" fill="#008080" fill-opacity="0.07"/><rect x="1216" y="192" width="1" height="1" fill="#008080" fill-opacity="0.26"/><rect x="1217" y="192" width="3" height="1" fill="#008080" fill-opacity="0.07"/><rect x="1220" y="192" width="1" height="1" fill="#008080" fill-opacity="0.26"/><rect x="1221" y="192" width="3" height="1" fill="#008080" fill-opacity="0.07"/><rect x="1224" y="192" width="1" height="1" fill="#000000" fill-opacity="0.07"/><rect x="1207" y="193" width="1" height="1" fill="#000000" fill-opacity="0.17"/><rect x="1209" y="193" width="8" height="1" fill="#008080" fill-opacity="0.61"/><rect x="1217" y="193" width="1" height="1" fill="#008080" fill-opacity="0.34"/><rect x="1218" y="193" width="6" height="1" fill="#008080" fill-opacity="0.61"/><rect x="1224" y="193" width="1" height="1" fill="#000000" fill-opacity="0.17"/><rect x="1211" y="194" width="2" height="1" fill="#008080" fill-opacity="0.07"/><rect x="1213" y="194" width="1" height="1" fill="#008080" fill-opacity="0.26"/><rect x="1214" y="194" width="3" height="1" fill="#008080" fill-opacity="0.07"/><rect x="1217" y="194" width="1" height="1" fill="#000000" fill-opacity="0.07"/><rect x="1219" y="194" width="1" height="1" fill="#0451a5" fill-opacity="0.24"/><rect x="1220" y="194" width="1" height="1" fill="#0451a5" fill-opacity="0.32"/><rect x="1221" y="194" width="3" height="1" fill="#0451a5" fill-opacity="0.06"/><rect x="1224" y="194" width="3" height="1" fill="#0451a5" fill-opacity="0.24"/><rect x="1227" y="194" width="2" height="1" fill="#0451a5" fill-opacity="0.06"/><rect x="1229" y="194" width="1" height="1" fill="#0451a5" fill-opacity="0.32"/><rect x="1230" y="194" width="1" height="1" fill="#000000" fill-opacity="0.04"/><rect x="1232" y="194" width="1" height="1" fill="#0451a5" fill-opacity="0.32"/><rect x="1233" y="194" width="3" height="1" fill="#0451a5" fill-opacity="0.06"/><rect x="1236" y="194" width="1" height="1" fill="#0451a5" fill-opacity="0.24"/><rect x="1237" y="194" width="2" height="1" fill="#0451a5" fill-opacity="0.06"/><rect x="1239" y="194" width="1" height="1" fill="#0451a5" fill-opacity="0.24"/><rect x="1240" y="194" width="1" height="1" fill="#0451a5" fill-opacity="0.32"/><rect x="1241" y="194" width="1" height="1" fill="#000000" fill-opacity="0.04"/><rect x="1243" y="194" width="1" height="1" fill="#0451a5" fill-opacity="0.32"/><rect x="1244" y="194" width="4" height="1" fill="#0451a5" fill-opacity="0.06"/><rect x="1248" y="194" width="2" height="1" fill="#0451a5" fill-opacity="0.24"/><rect x="1250" y="194" width="2" height="1" fill="#0451a5" fill-opacity="0.06"/><rect x="1252" y="194" width="1" height="1" fill="#0451a5" fill-opacity="0.32"/><rect x="1253" y="194" width="1" height="1" fill="#0451a5" fill-opacity="0.24"/><rect x="1211" y="195" width="6" height="1" fill="#008080" fill-opacity="0.61"/><rect x="1217" y="195" width="1" height="1" fill="#000000" fill-opacity="0.17"/><rect x="1219" y="195" width="1" height="1" fill="#0451a5" fill-opacity="0.58"/><rect x="1220" y="195" width="1" height="1" fill="#0451a5" fill-opacity="0.04"/><rect x="1221" y="195" width="8" height="1" fill="#0451a5" fill-opacity="0.58"/><rect x="1229" y="195" width="1" height="1" fill="#0451a5" fill-opacity="0.04"/><rect x="1230" y="195" width="1" height="1" fill="#000000" fill-opacity="0.17"/><rect x="1232" y="195" width="1" height="1" fill="#0451a5" fill-opacity="0.04"/><rect x="1233" y="195" width="7" height="1" fill="#0451a5" fill-opacity="0.58"/><rect x="1240" y="195" width="1" height="1" fill="#0451a5" fill-opacity="0.04"/><rect x="1241" y="195" width="1" height="1" fill="#000000" fill-opacity="0.17"/><rect x="1243" y="195" width="1" height="1" fill="#0451a5" fill-opacity="0.04"/><rect x="1244" y="195" width="8" height="1" fill="#0451a5" fill-opacity="0.58"/><rect x="1252" y="195" width="1" height="1" fill="#0451a5" fill-opacity="0.04"/><rect x="1253" y="195" width="1" height="1" fill="#0451a5" fill-opacity="0.58"/></svg>
<div class="minimap"></div>
<div class="sthumb"></div>
<div class="bottom">
  <div class="btn" style="left:6px;width:105px"><svg style="position:absolute;left:16px;top:8px" width="16" height="14" viewBox="0 0 16 14"><rect x="0" y="0" width="16" height="14" rx="1.5" fill="#8e95a0"/><rect x="2" y="4" width="5" height="2.5" fill="#e1e3e8"/><rect x="9" y="4" width="5" height="2.5" fill="#e1e3e8"/><rect x="2" y="8.5" width="5" height="3" fill="#e1e3e8"/><rect x="9" y="8.5" width="5" height="3" fill="#e1e3e8"/></svg><span style="position:absolute;left:40px;top:1px">Preview</span></div>
  <div class="btn" style="left:119px;width:107px"><svg style="position:absolute;left:16px;top:9px" width="16" height="13" viewBox="0 0 17 13"><path d="M4.5 3L1 6.5L4.5 10M12.5 3L16 6.5L12.5 10M9.8 0.5L7.2 12.5" fill="none" stroke="#8e95a0" stroke-width="1.6"/></svg><span style="position:absolute;left:40px;top:1px">Compile</span></div>
  <div class="btn" style="left:234px;width:121px"><svg style="position:absolute;left:16px;top:8px" width="16" height="15" viewBox="0 0 16 15"><path d="M2 12.6L8.6 6" stroke="#8e95a0" stroke-width="3.4" stroke-linecap="round"/><path d="M4.5 3.4Q7.5 -0.2 11 0.6L15.5 5.2L13.2 7.6L10.8 5.6L8.6 7.8Z" fill="#8e95a0"/></svg><span style="position:absolute;left:39.5px;top:1px">Build</span><div style="position:absolute;left:86px;top:0;width:1px;height:30px;background:#cdd0d6"></div><svg style="position:absolute;left:96px;top:12px" width="15" height="9" viewBox="0 0 15 9"><path d="M1 1L7.5 7.5L14 1" fill="none" stroke="#8e95a0" stroke-width="2"/></svg></div>
  <div class="vdiv"></div>
  <div class="bt" style="left:400px">Results</div>
  <div class="bt" style="left:474px">Compiled Code</div>
  <div class="bt" style="left:596px">Lineage</div>
</div>
<div class="uline"></div>
<div class="wbot"></div>
</body></html>
